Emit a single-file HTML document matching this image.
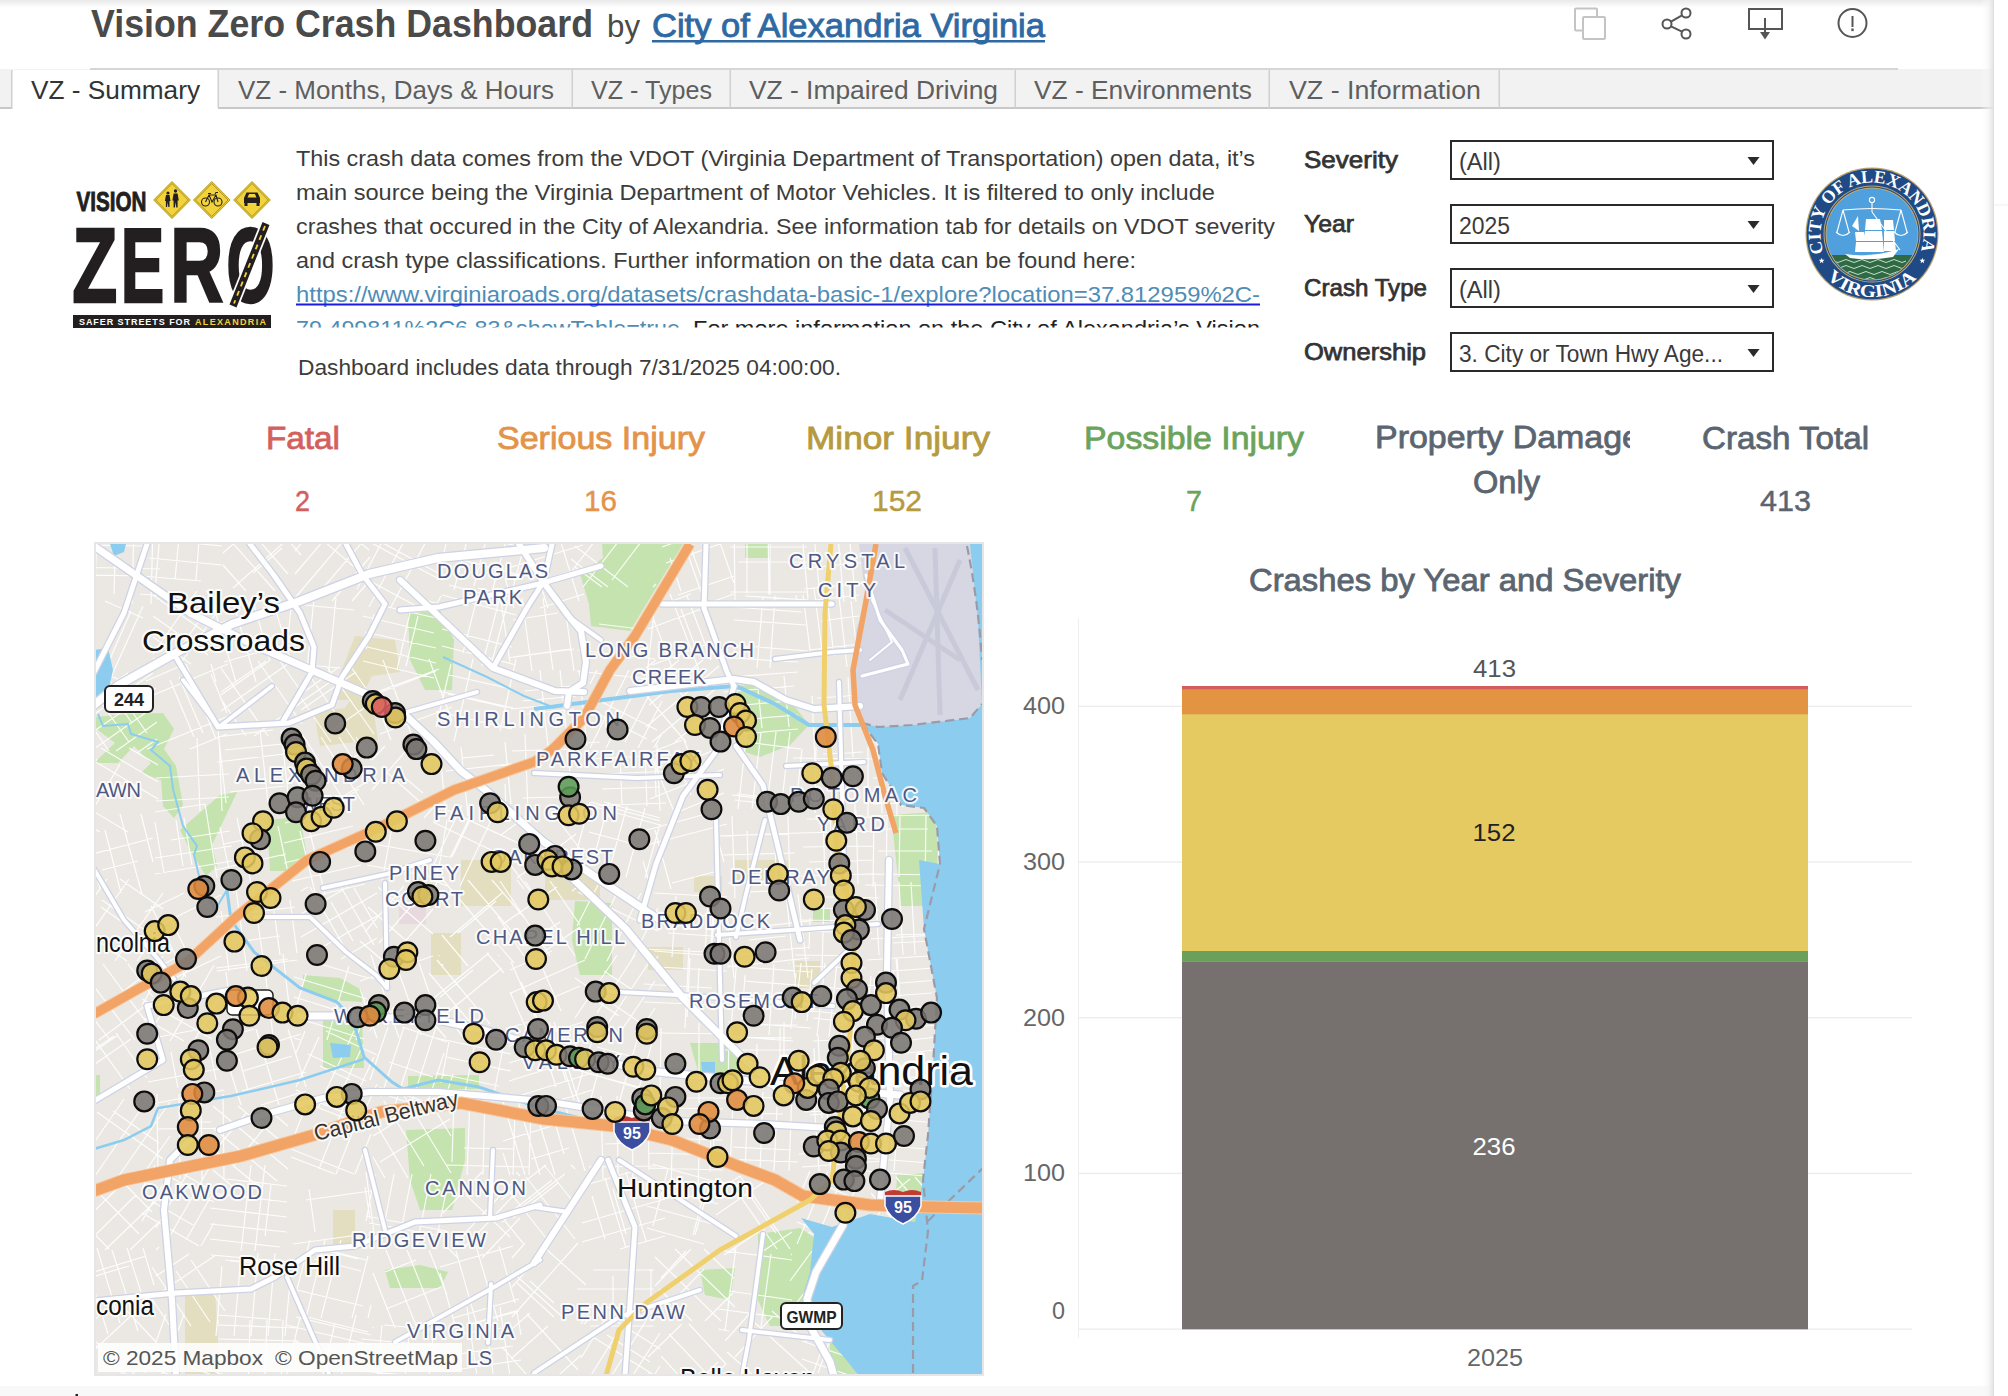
<!DOCTYPE html>
<html><head><meta charset="utf-8"><title>Vision Zero Crash Dashboard</title>
<style>html,body{margin:0;padding:0;background:#fff;width:2008px;height:1396px;overflow:hidden}
svg{display:block;font-family:"Liberation Sans", sans-serif}</style></head>
<body><svg width="2008" height="1396" viewBox="0 0 2008 1396">
<rect x="0" y="0" width="2008" height="1396" fill="#ffffff"/>
<defs><linearGradient id="tsh" x1="0" y1="0" x2="0" y2="1"><stop offset="0" stop-color="#e9e9e9"/><stop offset="1" stop-color="#ffffff"/></linearGradient><linearGradient id="rsh" x1="0" y1="0" x2="1" y2="0"><stop offset="0" stop-color="#ffffff" stop-opacity="0"/><stop offset="0.6" stop-color="#f2f2f2" stop-opacity="0.6"/><stop offset="1" stop-color="#dedede"/></linearGradient></defs>
<rect x="0" y="0" width="1994" height="8" fill="url(#tsh)"/>
<rect x="0" y="1386" width="1994" height="10" fill="#f8f8f8"/>
<rect x="75.5" y="1394" width="2.5" height="2" fill="#222"/>
<text x="91" y="37" font-size="38" fill="#4a4a4a" font-weight="bold" text-anchor="start" textLength="502" lengthAdjust="spacingAndGlyphs" >Vision Zero Crash Dashboard</text>
<text x="607" y="37" font-size="32" fill="#4a4a4a" font-weight="normal" text-anchor="start" textLength="33" lengthAdjust="spacingAndGlyphs" >by</text>
<text x="652" y="37" font-size="34" fill="#2f69a3" stroke="#2f69a3" stroke-width="0.9" textLength="393" lengthAdjust="spacingAndGlyphs">City of Alexandria Virginia</text>
<rect x="652" y="40" width="393" height="2.5" fill="#2f69a3"/>
<g fill="none" stroke="#c4c4c4" stroke-width="2"><rect x="1575" y="8.5" width="22" height="22" rx="1"/><rect x="1583" y="17" width="22" height="22" rx="1" fill="#fff"/></g>
<g fill="none" stroke="#555" stroke-width="2"><circle cx="1667" cy="24" r="4.5"/><circle cx="1686" cy="13" r="4.5"/><circle cx="1686" cy="34" r="4.5"/><line x1="1671" y1="21.7" x2="1682" y2="15.3"/><line x1="1671" y1="26.3" x2="1682" y2="31.7"/></g>
<g fill="none" stroke="#555" stroke-width="2"><rect x="1749" y="9" width="33" height="20"/><line x1="1765" y1="18" x2="1765" y2="34"/></g><line x1="1765" y1="18" x2="1765" y2="34" stroke="#555" stroke-width="2"/><path d="M1760 32 L1770 32 L1765 39.5 Z" fill="#555"/>
<g fill="none" stroke="#555" stroke-width="2"><circle cx="1852.5" cy="23" r="14"/><line x1="1852.5" y1="16" x2="1852.5" y2="27"/></g><rect x="1851.3" y="28.5" width="2.4" height="2.6" fill="#555"/>
<rect x="0" y="69" width="1994" height="40" fill="#f2f2f2"/>
<rect x="90" y="68" width="1808" height="2" fill="#d6d6d6"/>
<rect x="0" y="107" width="1994" height="2" fill="#c8c8c8"/>
<rect x="12" y="70" width="206" height="40" fill="#ffffff"/>
<rect x="11" y="70" width="1.5" height="39" fill="#cfcfcf"/>
<rect x="217.5" y="70" width="1.5" height="38" fill="#d0d0d0"/>
<rect x="571.5" y="70" width="1.5" height="38" fill="#d0d0d0"/>
<rect x="729.5" y="70" width="1.5" height="38" fill="#d0d0d0"/>
<rect x="1014.5" y="70" width="1.5" height="38" fill="#d0d0d0"/>
<rect x="1268.5" y="70" width="1.5" height="38" fill="#d0d0d0"/>
<rect x="1498.5" y="70" width="1.5" height="38" fill="#d0d0d0"/>
<text x="31" y="98.5" font-size="26" fill="#333333" textLength="169" lengthAdjust="spacingAndGlyphs">VZ - Summary</text>
<text x="238" y="98.5" font-size="26" fill="#5e5e5e" textLength="316" lengthAdjust="spacingAndGlyphs">VZ - Months, Days &amp; Hours</text>
<text x="591" y="98.5" font-size="26" fill="#5e5e5e" textLength="121" lengthAdjust="spacingAndGlyphs">VZ - Types</text>
<text x="749" y="98.5" font-size="26" fill="#5e5e5e" textLength="249" lengthAdjust="spacingAndGlyphs">VZ - Impaired Driving</text>
<text x="1034" y="98.5" font-size="26" fill="#5e5e5e" textLength="218" lengthAdjust="spacingAndGlyphs">VZ - Environments</text>
<text x="1289" y="98.5" font-size="26" fill="#5e5e5e" textLength="192" lengthAdjust="spacingAndGlyphs">VZ - Information</text>
<text x="296" y="166" font-size="22.5" fill="#3c3c3c" font-weight="normal" text-anchor="start" textLength="959" lengthAdjust="spacingAndGlyphs" >This crash data comes from the VDOT (Virginia Department of Transportation) open data, it’s</text>
<text x="296" y="200" font-size="22.5" fill="#3c3c3c" font-weight="normal" text-anchor="start" textLength="919" lengthAdjust="spacingAndGlyphs" >main source being the Virginia Department of Motor Vehicles. It is filtered to only include</text>
<text x="296" y="234" font-size="22.5" fill="#3c3c3c" font-weight="normal" text-anchor="start" textLength="979" lengthAdjust="spacingAndGlyphs" >crashes that occured in the City of Alexandria. See information tab for details on VDOT severity</text>
<text x="296" y="268" font-size="22.5" fill="#3c3c3c" font-weight="normal" text-anchor="start" textLength="840" lengthAdjust="spacingAndGlyphs" >and crash type classifications. Further information on the data can be found here:</text>
<text x="296" y="302" font-size="22.5" fill="#4e8db5" font-weight="normal" text-anchor="start" textLength="964" lengthAdjust="spacingAndGlyphs" >https://www.virginiaroads.org/datasets/crashdata-basic-1/explore?location=37.812959%2C-</text>
<rect x="296" y="303.5" width="964" height="2" fill="#1a1ae0"/>
<clipPath id="cl6"><rect x="280" y="310" width="1000" height="17.5"/></clipPath>
<g clip-path="url(#cl6)">
<text x="296" y="336" font-size="22.5" fill="#4e8db5" font-weight="normal" text-anchor="start" textLength="384" lengthAdjust="spacingAndGlyphs" >79.499811%2C6.83&amp;showTable=true</text>
<text x="693" y="336" font-size="22.5" fill="#222222" font-weight="normal" text-anchor="start" textLength="567" lengthAdjust="spacingAndGlyphs" >For more information on the City of Alexandria’s Vision</text>
</g>
<text x="298" y="375" font-size="21.5" fill="#3c3c3c" font-weight="normal" text-anchor="start" textLength="543" lengthAdjust="spacingAndGlyphs" >Dashboard includes data through 7/31/2025 04:00:00.</text>
<text x="1304" y="167.5" font-size="24" fill="#333333" font-weight="normal" text-anchor="start" textLength="94" lengthAdjust="spacingAndGlyphs" stroke="#333333" stroke-width="0.75">Severity</text>
<rect x="1451" y="141" width="322" height="38" fill="#fff" stroke="#2a2a2a" stroke-width="2"/>
<path d="M1747.5 157 L1759.5 157 L1753.5 165 Z" fill="#2a2a2a"/>
<text x="1304" y="231.5" font-size="24" fill="#333333" font-weight="normal" text-anchor="start" textLength="50" lengthAdjust="spacingAndGlyphs" stroke="#333333" stroke-width="0.75">Year</text>
<rect x="1451" y="205" width="322" height="38" fill="#fff" stroke="#2a2a2a" stroke-width="2"/>
<path d="M1747.5 221 L1759.5 221 L1753.5 229 Z" fill="#2a2a2a"/>
<text x="1304" y="295.5" font-size="24" fill="#333333" font-weight="normal" text-anchor="start" textLength="123" lengthAdjust="spacingAndGlyphs" stroke="#333333" stroke-width="0.75">Crash Type</text>
<rect x="1451" y="269" width="322" height="38" fill="#fff" stroke="#2a2a2a" stroke-width="2"/>
<path d="M1747.5 285 L1759.5 285 L1753.5 293 Z" fill="#2a2a2a"/>
<text x="1304" y="359.5" font-size="24" fill="#333333" font-weight="normal" text-anchor="start" textLength="122" lengthAdjust="spacingAndGlyphs" stroke="#333333" stroke-width="0.75">Ownership</text>
<rect x="1451" y="333" width="322" height="38" fill="#fff" stroke="#2a2a2a" stroke-width="2"/>
<path d="M1747.5 349 L1759.5 349 L1753.5 357 Z" fill="#2a2a2a"/>
<text x="1459" y="170" font-size="23" fill="#3a3a3a" font-weight="normal" text-anchor="start" textLength="42" lengthAdjust="spacingAndGlyphs" >(All)</text>
<text x="1459" y="234" font-size="23" fill="#3a3a3a" font-weight="normal" text-anchor="start" textLength="51" lengthAdjust="spacingAndGlyphs" >2025</text>
<text x="1459" y="298" font-size="23" fill="#3a3a3a" font-weight="normal" text-anchor="start" textLength="42" lengthAdjust="spacingAndGlyphs" >(All)</text>
<text x="1459" y="362" font-size="23" fill="#3a3a3a" font-weight="normal" text-anchor="start" textLength="264" lengthAdjust="spacingAndGlyphs" >3. City or Town Hwy Age...</text>
<text x="266" y="448.7" font-size="32" fill="#d4605e" stroke="#d4605e" stroke-width="0.8" textLength="74" lengthAdjust="spacingAndGlyphs">Fatal</text>
<text x="295" y="510.8" font-size="30" fill="#d4605e" stroke="#d4605e" stroke-width="0.45" textLength="15" lengthAdjust="spacingAndGlyphs">2</text>
<text x="497" y="448.7" font-size="32" fill="#e3934a" stroke="#e3934a" stroke-width="0.8" textLength="208" lengthAdjust="spacingAndGlyphs">Serious Injury</text>
<text x="584" y="510.8" font-size="30" fill="#e3934a" stroke="#e3934a" stroke-width="0.45" textLength="33" lengthAdjust="spacingAndGlyphs">16</text>
<text x="806" y="448.7" font-size="32" fill="#b59a3f" stroke="#b59a3f" stroke-width="0.8" textLength="184" lengthAdjust="spacingAndGlyphs">Minor Injury</text>
<text x="872" y="510.8" font-size="30" fill="#b59a3f" stroke="#b59a3f" stroke-width="0.45" textLength="50" lengthAdjust="spacingAndGlyphs">152</text>
<text x="1084" y="448.7" font-size="32" fill="#6ba35c" stroke="#6ba35c" stroke-width="0.8" textLength="220" lengthAdjust="spacingAndGlyphs">Possible Injury</text>
<text x="1186" y="510.8" font-size="30" fill="#6ba35c" stroke="#6ba35c" stroke-width="0.45" textLength="16" lengthAdjust="spacingAndGlyphs">7</text>
<clipPath id="clpd"><rect x="1360" y="410" width="270" height="60"/></clipPath>
<g clip-path="url(#clpd)"><text x="1375" y="448" font-size="32" fill="#5b6570" stroke="#5b6570" stroke-width="0.8" textLength="266" lengthAdjust="spacingAndGlyphs">Property Damage</text></g>
<text x="1473" y="493" font-size="32" fill="#5b6570" stroke="#5b6570" stroke-width="0.8" textLength="67" lengthAdjust="spacingAndGlyphs">Only</text>
<text x="1702" y="449" font-size="32" fill="#5b6570" stroke="#5b6570" stroke-width="0.8" textLength="167" lengthAdjust="spacingAndGlyphs">Crash Total</text>
<text x="1760" y="510.8" font-size="30" fill="#5b6570" stroke="#5b6570" stroke-width="0.45" textLength="51" lengthAdjust="spacingAndGlyphs">413</text>
<text x="1249" y="590.6" font-size="31" fill="#5b6570" stroke="#5b6570" stroke-width="0.8" textLength="432" lengthAdjust="spacingAndGlyphs">Crashes by Year and Severity</text>
<rect x="1078" y="618" width="1" height="720" fill="#efefef"/>
<rect x="1079" y="1328.5" width="833" height="1.3" fill="#ececec"/>
<text x="1052" y="1319.0" font-size="23" fill="#666" textLength="13" lengthAdjust="spacingAndGlyphs">0</text>
<rect x="1079" y="1172.8" width="833" height="1.3" fill="#ececec"/>
<text x="1023" y="1181.3" font-size="23" fill="#666" textLength="42" lengthAdjust="spacingAndGlyphs">100</text>
<rect x="1079" y="1017.1" width="833" height="1.3" fill="#ececec"/>
<text x="1023" y="1025.6" font-size="23" fill="#666" textLength="42" lengthAdjust="spacingAndGlyphs">200</text>
<rect x="1079" y="861.4" width="833" height="1.3" fill="#ececec"/>
<text x="1023" y="869.9" font-size="23" fill="#666" textLength="42" lengthAdjust="spacingAndGlyphs">300</text>
<rect x="1079" y="705.7" width="833" height="1.3" fill="#ececec"/>
<text x="1023" y="714.2" font-size="23" fill="#666" textLength="42" lengthAdjust="spacingAndGlyphs">400</text>
<rect x="1182" y="961.57" width="626" height="367.73" fill="#76716e"/>
<rect x="1182" y="950.67" width="626" height="11.20" fill="#6aa05a"/>
<rect x="1182" y="714.02" width="626" height="236.95" fill="#e5ca62"/>
<rect x="1182" y="689.11" width="626" height="25.21" fill="#e39443"/>
<rect x="1182" y="686.00" width="626" height="3.41" fill="#d65b5c"/>
<text x="1472.5" y="1155" font-size="23" fill="#ffffff" textLength="43" lengthAdjust="spacingAndGlyphs">236</text>
<text x="1472.5" y="841" font-size="23" fill="#222222" textLength="43" lengthAdjust="spacingAndGlyphs">152</text>
<text x="1473" y="677" font-size="23" fill="#555555" textLength="43" lengthAdjust="spacingAndGlyphs">413</text>
<text x="1467" y="1366" font-size="23" fill="#666666" textLength="56" lengthAdjust="spacingAndGlyphs">2025</text>
<rect x="1980" y="0" width="14" height="1396" fill="url(#rsh)"/>
<rect x="1994" y="204.5" width="14" height="1" fill="#efefef"/>
<g>
<text x="76.5" y="210.5" font-size="28" fill="#231f20" stroke="#231f20" stroke-width="0.9" font-weight="bold" textLength="70" lengthAdjust="spacingAndGlyphs">VISION</text>
<path d="M172 181.5 L190.3 200 L172 218.5 L153.7 200 Z" fill="#f2d33b" stroke="#b59a1a" stroke-width="1" stroke-linejoin="round"/>
<path d="M172 183.5 L188.3 200 L172 216.5 L155.7 200 Z" fill="none" stroke="#5a4a10" stroke-width="0.5"/>
<path d="M211.8 181.5 L230.10000000000002 200 L211.8 218.5 L193.5 200 Z" fill="#f2d33b" stroke="#b59a1a" stroke-width="1" stroke-linejoin="round"/>
<path d="M211.8 183.5 L228.10000000000002 200 L211.8 216.5 L195.5 200 Z" fill="none" stroke="#5a4a10" stroke-width="0.5"/>
<path d="M252 181.5 L270.3 200 L252 218.5 L233.7 200 Z" fill="#f2d33b" stroke="#b59a1a" stroke-width="1" stroke-linejoin="round"/>
<path d="M252 183.5 L268.3 200 L252 216.5 L235.7 200 Z" fill="none" stroke="#5a4a10" stroke-width="0.5"/>
<g fill="#231f20"><circle cx="168" cy="193" r="1.6"/><path d="M166 195 h3.5 l1 6 -1 0 0 6 -1.2 0 -0.6 -5 -0.6 5 -1.2 0 0 -6 -1 0 z"/><circle cx="175.5" cy="191" r="1.7"/><path d="M173.6 193.5 h4 l1.2 7 -1.2 0 0 7 -1.3 0 -0.7 -5.5 -0.7 5.5 -1.3 0 0 -7 -1.2 0 z"/></g>
<g fill="none" stroke="#231f20" stroke-width="1.1"><circle cx="205.5" cy="202" r="4"/><circle cx="218" cy="202" r="4"/><path d="M205.5 202 L209 195 L216 195 L218 202 M209 195 L212 202 L216 195 M208 193.5 h3 M215 194 l1 -1.5 h2"/></g>
<g fill="#231f20"><path d="M244 203 v-5 l2.5 -5.5 h11 l2.5 5.5 v5 z"/><rect x="244.5" y="203" width="3" height="3"/><rect x="256.5" y="203" width="3" height="3"/></g><path d="M247.5 197.5 l1.6 -3.5 h5.8 l1.6 3.5 z" fill="#f2d33b"/>
<text x="72.2" y="302" font-size="106" fill="#231f20" stroke="#231f20" stroke-width="2.6" stroke-linejoin="miter" font-weight="bold" textLength="45" lengthAdjust="spacingAndGlyphs">Z</text>
<text x="120.8" y="302" font-size="106" fill="#231f20" stroke="#231f20" stroke-width="2.6" stroke-linejoin="miter" font-weight="bold" textLength="43.5" lengthAdjust="spacingAndGlyphs">E</text>
<text x="170.2" y="302" font-size="106" fill="#231f20" stroke="#231f20" stroke-width="2.6" stroke-linejoin="miter" font-weight="bold" textLength="53" lengthAdjust="spacingAndGlyphs">R</text>
<text x="226.6" y="302" font-size="106" fill="#231f20" stroke="#231f20" stroke-width="2.6" stroke-linejoin="miter" font-weight="bold" textLength="48" lengthAdjust="spacingAndGlyphs">O</text>
<line x1="266" y1="223.5" x2="233" y2="306" stroke="#ffffff" stroke-width="11"/>
<line x1="266" y1="223.5" x2="233" y2="306" stroke="#231f20" stroke-width="7.5"/>
<line x1="265" y1="226" x2="234" y2="303.5" stroke="#f2d33b" stroke-width="1.8" stroke-dasharray="5 5"/>
<rect x="73" y="315" width="198" height="13" fill="#231f20"/>
<text x="79" y="325" font-size="9" fill="#ffffff" font-weight="bold" textLength="111" lengthAdjust="spacing">SAFER STREETS FOR</text>
<text x="195" y="325" font-size="9" fill="#f2d33b" font-weight="bold" textLength="71" lengthAdjust="spacing">ALEXANDRIA</text>
</g>
<defs><path id="sealtop" d="M1823.9 252.5 A51.5 51.5 0 1 1 1920.1 252.5"/><path id="sealbot" d="M1826.7 277.8 A63 63 0 0 0 1917.3 277.8"/></defs>
<circle cx="1872" cy="234" r="66.5" fill="#b9a16a"/>
<circle cx="1872" cy="234" r="65.3" fill="#1f4a86"/>
<circle cx="1872" cy="234" r="48.5" fill="#c2ab72"/>
<circle cx="1872" cy="234" r="47.5" fill="#1f4a86"/>
<circle cx="1872" cy="234" r="46.5" fill="#c2ab72"/>
<circle cx="1872" cy="234" r="45.5" fill="#4fa0dc"/>
<clipPath id="sealin"><circle cx="1872" cy="234" r="45.5"/></clipPath>
<g clip-path="url(#sealin)"><rect x="1820" y="255" width="110" height="30" fill="#2f6a45"/><path d="M1826 261 q4 -3 8 0 t8 0 t8 0 t8 0 t8 0 t8 0 t8 0 t8 0 t8 0 t8 0 M1826 267 q4 -3 8 0 t8 0 t8 0 t8 0 t8 0 t8 0 t8 0 t8 0 t8 0 t8 0 M1830 273 q4 -3 8 0 t8 0 t8 0 t8 0 t8 0 t8 0 t8 0 t8 0 t8 0 M1834 279 q4 -3 8 0 t8 0 t8 0 t8 0 t8 0 t8 0 t8 0 t8 0" fill="none" stroke="#d6ecd9" stroke-width="0.9"/></g>
<g fill="#ffffff"><path d="M1845 254 Q1872 258 1899 249 L1893 257 Q1870 261 1850 258 Z"/><path d="M1855 232 L1864 232 L1866 241 L1856 241 Z"/><path d="M1856 242 L1866 242 L1867 252 L1855 252 Z"/><path d="M1852 226 L1858 216 L1859 231 Z"/><path d="M1866 219 L1880 219 L1882 230 L1865 230 Z"/><path d="M1865 231 L1882 231 L1883 241 L1864 241 Z"/><path d="M1864 242 L1883 242 L1884 252 L1863 252 Z"/><path d="M1884 220 L1893 220 L1894 230 L1884 230 Z"/><path d="M1884 231 L1894 231 L1895 241 L1884 241 Z"/><path d="M1884 242 L1895 242 L1896 251 L1884 251 Z"/></g>
<g fill="none" stroke="#ffffff" stroke-width="1.1"><path d="M1843 210 Q1872 207 1901 210"/><line x1="1872" y1="203" x2="1872" y2="212"/><path d="M1843 210 L1837 232 M1843 210 L1849 232 M1836 232 q7 7 14 0 M1901 210 L1895 232 M1901 210 L1907 232 M1894 232 q7 7 14 0 M1872 212 L1900 250"/><circle cx="1872" cy="200" r="2.6"/></g>
<text font-size="18" fill="#ffffff" font-family="Liberation Serif" font-weight="bold"><textPath href="#sealtop" startOffset="0" textLength="197" lengthAdjust="spacingAndGlyphs">CITY OF ALEXANDRIA</textPath></text>
<text font-size="18" fill="#ffffff" font-family="Liberation Serif" font-weight="bold"><textPath href="#sealbot" startOffset="0" textLength="100" lengthAdjust="spacingAndGlyphs">VIRGINIA</textPath></text>
<polygon points="1821.7,257.8 1820.9,259.7 1818.8,259.8 1820.4,261.2 1819.9,263.2 1821.7,262.1 1823.4,263.2 1822.9,261.2 1824.5,259.8 1822.4,259.7" fill="#ffffff"/>
<polygon points="1922.3,257.8 1921.6,259.7 1919.5,259.8 1921.1,261.2 1920.6,263.2 1922.3,262.1 1924.1,263.2 1923.6,261.2 1925.2,259.8 1923.1,259.7" fill="#ffffff"/>
<rect x="94" y="542" width="890" height="834" fill="#e6e6e6"/>
<clipPath id="mapclip"><rect x="96" y="544" width="886" height="830"/></clipPath>
<g clip-path="url(#mapclip)">
<rect x="96" y="544" width="886" height="830" fill="#ebe8e3"/>
<polygon points="602,544 683,544 662,578 630,631 591,626 589,604 580,574 603,558" fill="#c4e3ae"/>
<polygon points="745,544 770,544 770,558 745,558" fill="#c4e3ae"/>
<polygon points="736,686 760,684 790,700 809,725 790,745 760,757 745,752 748,720" fill="#c4e3ae"/>
<polygon points="408,614 440,610 454,640 452,690 425,690 410,660" fill="#c4e3ae"/>
<polygon points="94,717 130,714 163,713 174,729 164,749 176,766 183,805 174,818 163,806 161,780 141,773 151,763 134,746 118,763 94,763 115,743 94,727" fill="#c4e3ae"/>
<polygon points="180,830 220,795 237,792 212,845 217,866 206,876 191,852" fill="#c4e3ae"/>
<polygon points="267,820 300,817 306,850 300,871 270,871" fill="#c4e3ae"/>
<polygon points="303,975 340,978 362,990 362,1002 330,1000 303,990" fill="#c4e3ae"/>
<polygon points="323,1020 362,1020 364,1068 323,1068" fill="#c4e3ae"/>
<polygon points="408,1076 479,1075 479,1089 408,1089" fill="#c4e3ae"/>
<polygon points="406,1130 465,1128 465,1160 452,1210 420,1210 410,1180" fill="#c4e3ae"/>
<polygon points="385,1270 420,1265 448,1272 440,1288 390,1288" fill="#c4e3ae"/>
<polygon points="575,901 612,903 612,975 580,975 572,940" fill="#c4e3ae"/>
<polygon points="690,1043 725,1043 740,1060 740,1078 700,1078" fill="#c4e3ae"/>
<polygon points="758,1234 800,1228 818,1240 818,1300 808,1326 770,1326 758,1300" fill="#c4e3ae"/>
<polygon points="830,1330 850,1330 860,1376 830,1376" fill="#c4e3ae"/>
<polygon points="897,1175 928,1173 928,1234 905,1234 895,1210" fill="#c4e3ae"/>
<polygon points="900,860 924,860 924,906 900,906" fill="#c4e3ae"/>
<polygon points="891,815 935,812 940,870 924,906 900,896" fill="#c4e3ae"/>
<polygon points="813,908 830,908 830,922 813,922" fill="#c4e3ae"/>
<polygon points="94,1075 100,1075 100,1098 94,1098" fill="#c4e3ae"/>
<polygon points="960,1300 982,1290 982,1376 960,1376" fill="#c4e3ae"/>
<polygon points="700,1270 735,1268 730,1300 705,1295" fill="#c4e3ae"/>
<polygon points="355,636 395,640 400,672 372,676 360,700 330,700" fill="#e4dec0"/>
<polygon points="314,712 345,708 350,700 372,700 378,740 320,746" fill="#e4dec0"/>
<polygon points="461,860 511,860 511,906 461,906" fill="#e4dec0"/>
<polygon points="431,933 461,933 461,975 431,975" fill="#e4dec0"/>
<polygon points="694,876 722,876 722,892 694,892" fill="#e4dec0"/>
<polygon points="648,947 683,947 683,970 648,970" fill="#e4dec0"/>
<polygon points="795,961 820,961 820,988 795,988" fill="#e4dec0"/>
<polygon points="185,1290 215,1290 220,1374 185,1374" fill="#e4dec0"/>
<polygon points="333,1210 355,1210 355,1244 333,1244" fill="#e4dec0"/>
<polygon points="735,860 790,860 790,880 735,880" fill="#e4dec0"/>
<polygon points="545,870 600,872 600,900 545,900" fill="#e4dec0"/>
<polygon points="399,906 426,906 426,924 399,924" fill="#e8d9de"/>
<path d="M153 525L151 604M134 525L132 604M116 525L114 594M97 525L95 589M78 530L77 587M143 546L93 545M136 529L100 528M146 576L88 575M160 569L75 567M140 520L208 526M140 538L222 546M149 558L222 565M142 576L201 581M140 594L185 598M161 522L155 591M179 537L175 580M199 541L196 580M296 516L301 522M267 516L301 555M238 516L288 574M223 532L275 591M223 565L246 591M282 548L253 573M299 529L233 588M265 516L223 553M370 580L352 601M370 557L332 601M370 533L312 601M361 520L295 598M341 520L295 574M321 520L295 551M369 550L337 523M365 576L312 531M441 596L435 607M436 523L391 607M411 528L369 607M393 521L357 589M438 573L370 536M418 607L357 574M439 579L364 539M524 546L509 603M510 526L489 603M490 525L474 586M471 525L454 590M451 525L443 556M503 599L449 585M524 548L455 530M523 576L443 555M559 536L579 601M529 549L548 608M505 578L514 608M578 569L516 588M583 545L505 569M584 594L540 608M656 584L653 587M644 538L612 580M639 515L583 587M615 515L571 572M592 515L571 541M652 538L621 515M628 587L575 546M608 587L571 559M602 587L575 567M734 594L700 606M734 576L678 595M734 539L666 563M715 528L662 547M663 528L659 529M734 583L715 528M706 606L679 529M703 582L692 551M681 591L670 558M730 532L807 532M730 547L807 547M738 562L807 562M730 592L807 592M770 524L770 594M747 525L747 593M768 523L769 595M734 517L735 600M871 522L879 602M849 534L856 602M837 527L844 602M814 535L819 586M801 522L808 599M796 595L797 602M872 524L798 531M877 582L804 589M880 561L796 569M869 530L944 526M872 544L944 540M880 558L944 554M869 572L935 568M869 586L930 582M906 598L944 596M940 518L944 582M926 525L930 589M869 519L874 598M912 518L917 598M958 525L1013 531M940 552L1013 561M943 567L1004 575M951 583L1013 591M984 534L979 577M986 529L979 582M998 533L992 582M105 601L143 618M68 657L133 686M68 676L92 686M131 611L99 684M143 606L107 686M87 601L68 642M206 591L230 608M153 595L230 650M153 616L208 655M153 637L191 664M153 658L162 664M212 603L175 655M197 591L153 654M225 601L180 664M273 601L291 661M253 601L270 661M233 601L256 682M212 601L236 682M211 664L216 682M272 607L214 625M284 645L224 662M336 598L328 679M314 598L306 681M292 598L287 648M340 668L307 665M354 610L305 605M416 598L436 603M379 605L436 618M363 616L434 633M365 632L436 648M363 646L436 663M363 661L434 678M374 614L366 649M411 608L397 670M418 616L406 666M478 588L516 598M442 595L516 615M442 629L512 647M442 646L516 665M500 597L482 666M510 594L490 669M477 598L463 653M565 608L574 671M543 598L553 670M522 598L532 671M501 602L510 662M558 613L513 620M574 649L508 658M570 649L513 657M655 605L646 684M658 680L577 671M640 629L599 624M655 659L578 650M716 641L652 665M712 605L648 629M691 594L648 610M699 670L670 594M698 654L681 609M673 670L648 605M711 660L687 596M745 596L808 600M733 607L802 612M734 620L806 625M733 645L808 651M733 658L798 662M763 596L757 668M775 596L770 668M873 588L882 664M851 601L857 651M838 588L847 667M826 588L834 656M814 588L824 667M803 595L811 658M800 667L800 667M877 642L809 650M859 595L816 600M859 616L821 621M943 616L939 668M932 606L927 672M922 591L916 672M910 591L904 672M888 592L881 672M876 591L870 672M938 630L869 625M932 613L879 609M923 619L886 616M926 649L878 645M941 595L1016 596M941 607L1016 608M952 619L1016 620M941 630L1016 632M945 642L1016 643M953 654L1016 655M941 666L1016 667M982 615L982 650M945 610L944 653M1014 592L1013 673M990 607L989 658M157 739L137 753M157 722L116 751M151 709L88 753M156 688L84 738M153 673L79 725M128 673L79 707M147 733L109 679M132 723L114 697M109 751L80 709M129 742L94 693M227 734L190 749M229 716L147 749M228 664L146 698M185 664L146 681M194 737L170 680M216 739L186 664M227 713L211 674M203 733L179 677M301 661L302 662M280 661L302 693M258 661L302 724M221 668L268 736M221 699L246 736M266 661L221 692M292 661L221 711M302 702L254 736M269 661L221 695M351 667L374 700M327 667L374 734M312 679L355 742M301 698L331 742M301 733L307 742M339 667L301 694M367 706L328 733M356 672L301 710M352 667L301 702M451 659L452 661M429 659L452 721M383 660L414 741M374 696L391 740M452 707L380 734M436 671L376 694M439 669L374 693M516 659L500 731M473 659L454 741M451 664L436 727M512 729L436 711M513 708L439 691M504 707L448 694M512 689L449 675M579 670L587 746M560 670L568 746M540 670L548 746M572 686L525 691M574 709L527 714M590 701L511 709M576 696L523 701M662 733L654 748M662 701L638 748M661 672L625 742M640 680L606 748M629 670L590 748M613 670L590 716M597 670L590 684M647 739L590 710M657 730L590 696M719 705L675 742M719 686L652 742M719 666L646 727M703 660L649 705M679 660L646 688M656 660L646 668M686 742L646 695M698 714L673 684M731 677L798 672M724 692L794 686M734 706L798 700M724 721L798 715M731 735L798 729M757 680L762 728M784 676L789 727M874 680L878 761M848 677L853 757M823 676L827 752M812 696L815 761M868 703L813 706M863 752L823 754M863 695L817 698M936 663L944 730M924 678L932 742M909 663L917 731M897 674L905 741M882 663L892 741M872 684L879 742M944 734L872 742M937 727L885 733M1028 679L1023 741M1018 668L1012 741M1007 668L1000 741M996 668L989 741M984 673L979 726M973 668L967 741M962 668L955 741M951 668L947 710M1017 685L962 680M1028 711L947 704M158 748L158 748M129 748L158 765M101 748L158 782M74 749L158 799M76 801L128 832M74 817L100 832M120 764L95 806M97 759L79 788M219 736L222 811M197 738L200 811M229 797L156 801M229 774L156 778M281 730L289 803M260 730L268 803M218 730L226 803M273 730L217 737M282 744L225 750M292 753L217 762M285 786L230 792M356 737L371 760M339 737L368 783M321 737L364 805M304 737L348 807M295 778L321 819M371 779L304 821M359 789L330 808M369 748L295 794M451 816L450 818M451 787L424 818M410 746L372 790M385 746L372 760M423 793L398 772M428 809L382 768M505 742L511 804M461 747L468 816M439 742L446 816M494 755L462 758M512 764L446 771M569 748L571 812M525 734L528 812M505 784L506 812M561 797L523 798M569 749L512 751M666 803L587 806M660 787L602 789M672 771L601 774M672 755L587 759M600 742L587 743M647 806L645 750M622 804L620 754M656 797L655 759M660 811L657 745M724 793L673 814M724 769L650 799M724 746L661 772M682 740L650 753M714 813L684 740M675 814L650 753M691 795L677 761M802 749L796 806M790 732L781 809M776 732L768 797M761 732L752 809M747 732L738 809M733 732L732 738M805 804L732 795M798 808L735 800M797 801L737 794M801 749L746 742M868 747L868 818M855 759L855 816M842 747L842 820M816 747L815 813M851 777L820 777M878 759L793 758M873 752L947 750M873 778L947 776M873 791L947 789M873 804L945 802M878 816L936 815M902 761L903 807M880 757L882 813M896 752L897 816M1012 757L1011 813M1001 745L1000 817M978 745L977 817M955 745L954 807M944 754L942 817M1008 791L940 789M1011 813L936 811M1013 748L935 746M141 814L153 862M120 814L142 894M105 830L121 893M86 837L100 888M153 838L81 857M138 861L102 870M232 877L224 878M232 861L155 874M232 846L155 858M230 831L171 840M205 804L155 812M164 873L155 822M183 866L176 820M217 878L205 804M192 865L184 818M278 826L289 877M237 818L255 901M220 827L234 893M267 835L224 844M286 854L215 870M365 884L310 897M361 865L292 881M350 847L284 863M353 826L284 843M308 817L285 823M325 895L309 828M316 896L300 831M367 843L449 857M367 865L433 877M447 820L434 896M392 827L382 882M445 809L518 843M433 822L518 863M433 880L447 886M462 805L433 866M470 817L450 858M470 820L452 857M498 806L460 886M584 882L572 891M576 834L517 878M533 811L501 835M534 876L516 852M584 854L551 811M530 891L501 852M564 868L532 825M660 824L645 878M645 808L626 877M627 806L607 878M609 802L592 865M590 802L577 850M660 821L591 802M648 848L589 832M660 818L604 802M660 825L588 805M708 803L724 862M655 830L671 889M643 861L649 882M727 824L643 846M717 811L643 831M714 872L672 883M788 816L790 891M774 816L777 898M747 831L749 898M732 816L735 898M795 853L723 855M791 881L728 883M801 833L717 836M776 891L744 892M807 819L874 817M801 833L874 831M803 847L874 846M809 862L874 860M801 876L874 874M856 810L858 884M823 813L825 882M830 810L832 884M939 815L938 877M926 815L925 887M900 815L899 877M887 817L886 887M874 816L873 887M932 851L878 851M928 829L883 829M946 875L865 874M946 886L865 885M944 830L1026 822M951 868L1021 862M952 881L1026 874M953 894L1026 887M1013 901L1026 900M992 827L998 891M974 833L979 888M949 842L952 883M163 956L159 961M163 924L137 961M163 893L115 961M129 879L87 939M107 879L82 914M163 909L120 879M142 936L101 907M127 961L82 930M149 933L102 900M221 956L177 977M221 936L145 973M221 895L145 932M184 893L145 912M190 959L169 915M186 977L151 906M290 900L297 953M271 889L280 955M253 889L265 971M236 889L247 971M221 911L229 971M280 936L236 942M295 907L216 917M297 960L217 971M377 938L341 959M377 916L317 950M377 893L301 937M348 887L301 914M308 887L301 891M377 928L354 888M374 945L341 887M351 959L310 887M353 941L331 902M433 966L433 966M433 909L384 966M426 889L379 943M404 886L365 932M433 934L378 887M419 952L368 907M389 966L360 941M517 880L524 889M492 880L524 917M468 880L524 946M443 880L514 963M442 935L468 966M442 964L443 966M496 901L458 933M502 893L450 937M576 881L580 887M550 881L580 925M525 881L575 956M500 881L550 956M498 917L524 956M498 955L499 956M560 922L534 939M580 927L538 956M557 887L503 924M658 956L655 961M658 908L631 961M641 893L607 961M616 895L585 959M598 885L577 926M645 905L616 890M658 931L578 892M654 893L727 897M657 912L727 917M668 933L727 937M654 951L716 956M714 899L710 960M708 905L705 952M715 902L711 957M676 896L672 957M798 894L808 978M786 894L795 978M726 906L734 978M809 921L726 930M786 936L749 940M809 958L727 967M809 947L728 956M805 896L879 898M812 908L879 910M795 920L879 921M795 931L872 933M795 955L861 956M795 966L865 968M810 918L809 949M851 894L850 974M824 894L822 974M849 906L848 963M946 882L950 954M934 882L938 955M923 884L926 945M911 882L915 955M899 882L903 955M887 888L890 942M875 882L879 955M952 934L871 939M929 934L896 935M933 941L893 943M996 875L1002 940M984 890L990 959M969 875L976 957M956 891L960 940M941 875L947 942M1006 917L933 923M996 888L939 893M999 929L943 934M128 964L153 997M103 964L150 1027M80 968L135 1040M80 1001L110 1040M131 991L102 1013M153 1000L99 1040M142 977L86 1020M220 1038L218 1041M220 996L194 1041M214 965L170 1041M190 965L147 1038M165 965L142 1005M212 1039L142 999M184 1041L142 1017M283 954L291 1022M263 954L273 1036M226 972L232 1021M288 959L216 968M273 991L236 996M317 963L368 978M294 977L367 999M294 997L365 1019M294 1017L364 1039M294 1038L300 1040M306 974L295 1011M349 966L327 1040M368 1001L356 1040M439 955L439 956M419 963L439 1022M397 967L421 1035M371 955L399 1038M360 989L377 1038M411 966L371 979M433 956L360 981M438 1001L372 1024M487 953L504 973M437 960L490 1024M429 973L483 1038M429 995L464 1038M429 1018L446 1038M489 953L429 1002M493 975L441 1018M473 970L440 997M502 968L432 1025M585 1031L581 1033M580 986L527 1009M585 960L511 993M552 951L510 970M542 1033L511 962M561 1011L543 969M528 1033L510 992M537 1018L521 982M655 1008L640 1031M655 981L621 1031M654 955L603 1031M635 955L597 1013M617 955L575 1018M619 1016L592 998M645 1026L575 978M640 995L604 971M644 949L727 953M659 967L727 971M644 984L712 988M644 1002L715 1005M699 968L697 1009M690 958L687 1017M689 948L685 1028M801 957L801 957M728 966L811 972M744 981L809 986M728 994L810 1000M728 1022L811 1028M728 1036L793 1041M745 975L742 1019M774 964L769 1035M737 957L730 1041M796 973L791 1029M871 976L865 1037M861 963L853 1037M849 963L841 1037M837 963L829 1037M825 963L817 1036M812 969L807 1021M801 963L795 1019M789 963L789 964M847 1022L813 1018M867 1017L794 1009M855 990L812 986M867 960L943 955M878 972L948 967M865 986L938 980M865 998L932 993M870 1010L933 1006M865 1023L931 1019M893 970L896 1016M874 978L876 1011M897 959L902 1027M896 958L902 1027M1017 946L1012 1017M1006 946L1000 1023M994 959L989 1023M983 946L978 1023M972 946L967 1013M960 946L955 1023M937 946L936 969M1017 995L936 989M1010 955L947 950M1017 979L936 973M1013 963L944 958M116 1033L147 1078M90 1033L130 1089M69 1076L96 1115M69 1113L71 1115M118 1035L69 1069M131 1039L69 1082M114 1036L70 1066M224 1090L147 1105M224 1068L148 1082M201 1029L153 1038M178 1088L171 1052M216 1080L209 1045M306 1091L261 1105M306 1072L242 1091M292 1056L243 1071M301 1034L227 1057M254 1029L227 1037M248 1090L239 1058M306 1087L288 1029M279 1105L256 1029M241 1105L227 1060M377 1084L366 1108M374 1057L353 1102M363 1045L335 1106M354 1031L318 1108M319 1037L296 1087M305 1031L296 1053M336 1108L296 1090M350 1080L320 1066M366 1081L308 1054M377 1055L326 1031M453 1074L442 1108M444 1053L426 1108M436 1027L410 1108M420 1027L394 1108M404 1027L381 1097M388 1027L370 1080M372 1027L370 1031M422 1107L380 1093M433 1077L389 1062M447 1042L402 1027M427 1102L379 1087M471 1028L509 1036M436 1038L511 1054M446 1057L511 1071M436 1073L499 1086M436 1107L441 1108M449 1042L441 1083M476 1038L464 1097M507 1028L491 1108M592 1090L548 1104M592 1073L509 1099M592 1055L509 1081M580 1041L509 1063M583 1022L509 1046M528 1022L509 1028M556 1087L541 1040M579 1103L554 1022M574 1100L549 1022M566 1081L553 1040M653 1092L645 1120M652 1043L629 1123M638 1037L614 1120M604 1050L591 1098M593 1037L576 1095M578 1037L570 1064M642 1067L593 1053M642 1089L580 1071M641 1059L597 1047M653 1091L570 1068M659 1033L730 1034M659 1076L733 1077M669 1098L733 1098M661 1028L660 1097M699 1023L699 1103M729 1024L728 1103M733 1025L797 1025M718 1037L792 1038M719 1050L797 1050M718 1074L780 1075M735 1087L792 1087M757 1044L757 1076M784 1022L784 1098M780 1028L780 1092M813 1041L888 1038M804 1065L888 1062M804 1089L888 1085M807 1101L888 1097M804 1112L880 1109M814 1059L815 1097M814 1048L817 1108M818 1035L822 1118M852 1035L856 1118M871 1032L945 1024M869 1045L945 1036M869 1057L945 1049M876 1069L945 1061M869 1082L945 1074M879 1094L945 1086M891 1046L896 1083M870 1031L878 1103M996 1020L1001 1094M984 1020L988 1094M972 1023L976 1094M947 1026L950 1081M935 1033L938 1094M1002 1063L951 1065M1002 1061L951 1064M1018 1026L935 1031M1003 1021L946 1024M170 1170L163 1180M170 1136L139 1180M170 1102L116 1180M148 1099L95 1176M124 1099L91 1147M159 1143L113 1111M163 1159L97 1112M223 1094L224 1179M201 1094L202 1179M179 1094L180 1179M157 1094L158 1179M232 1128L158 1129M211 1122L179 1122M264 1106L288 1126M238 1106L288 1147M213 1106L288 1169M213 1128L277 1181M213 1149L258 1186M213 1170L232 1186M266 1126L234 1165M246 1113L217 1148M371 1134L355 1174M364 1103L336 1174M347 1098L319 1169M309 1098L291 1144M365 1126L314 1106M371 1123L310 1099M354 1174L291 1149M335 1174L291 1157M447 1092L451 1098M428 1098L451 1136M403 1094L451 1173M384 1101L424 1166M373 1119L408 1178M373 1157L385 1178M435 1098L373 1136M450 1119L380 1162M531 1102L529 1175M515 1108L513 1175M485 1097L483 1175M470 1097L467 1175M454 1097L452 1162M529 1167L447 1165M513 1149L464 1148M532 1102L446 1099M578 1098L586 1125M563 1098L585 1171M548 1098L564 1154M532 1098L555 1175M517 1098L540 1175M503 1102L525 1175M503 1153L510 1175M585 1116L503 1141M569 1148L531 1159M663 1114L663 1124M648 1096L649 1170M632 1101L633 1179M617 1096L618 1179M601 1096L603 1179M656 1166L589 1167M640 1143L605 1144M659 1122L585 1123M652 1112L592 1113M662 1108L723 1109M649 1123L723 1124M654 1138L722 1140M649 1153L723 1155M649 1168L723 1170M649 1183L711 1185M714 1134L713 1168M673 1108L671 1193M700 1108L698 1193M711 1130L710 1172M792 1092L789 1171M777 1107L774 1171M763 1092L760 1171M748 1098L745 1171M733 1102L730 1171M783 1114L744 1113M797 1099L731 1096M791 1150L733 1147M798 1162L725 1159M803 1103L884 1097M810 1115L884 1110M814 1128L884 1123M801 1142L884 1135M799 1154L866 1150M802 1167L883 1161M826 1096L831 1173M814 1101L819 1171M857 1109L861 1156M841 1096L846 1173M865 1103L938 1109M865 1117L938 1123M865 1144L938 1150M865 1158L929 1163M865 1171L938 1177M899 1103L894 1171M878 1118L875 1153M936 1096L929 1179M938 1134L934 1174M1015 1117L1015 1163M1001 1102L1002 1176M987 1102L988 1176M973 1112L974 1176M959 1102L961 1176M946 1102L947 1172M1023 1173L945 1174M1011 1158L958 1159M159 1247L156 1250M159 1222L130 1250M159 1198L105 1250M136 1195L80 1250M134 1172L76 1229M109 1249L79 1218M139 1234L95 1189M152 1212L118 1177M214 1223L201 1246M214 1191L186 1240M211 1165L164 1246M192 1165L156 1228M174 1165L142 1221M155 1165L142 1189M193 1225L153 1202M214 1192L168 1165M199 1246L142 1213M214 1202L153 1167M226 1179L287 1186M210 1193L287 1202M210 1208L287 1217M210 1224L287 1232M210 1239L280 1247M271 1185L265 1236M251 1165L241 1251M265 1165L255 1251M365 1234L293 1244M378 1190L306 1200M315 1232L309 1189M374 1233L366 1172M370 1219L365 1187M446 1192L435 1247M431 1174L417 1245M412 1174L398 1247M394 1174L380 1247M375 1174L366 1221M446 1231L366 1216M435 1235L369 1223M516 1172L520 1176M466 1195L510 1237M443 1243L458 1258M520 1218L482 1258M482 1172L443 1213M511 1184L453 1246M513 1196L465 1247M571 1165L575 1169M544 1165L575 1204M526 1177L575 1239M501 1181L550 1243M501 1216L523 1243M558 1183L513 1218M546 1165L501 1200M552 1180L511 1212M565 1174L502 1222M665 1236L620 1249M665 1218L582 1242M665 1199L582 1223M631 1172L582 1186M605 1239L592 1196M646 1241L626 1172M626 1248L605 1178M626 1234L613 1189M652 1164L720 1183M661 1188L718 1204M647 1206L720 1226M647 1228L704 1244M710 1183L695 1235M707 1182L693 1235M668 1169L653 1226M792 1254L791 1255M792 1232L757 1255M792 1209L724 1255M767 1180L716 1215M740 1176L716 1192M777 1249L731 1183M790 1249L740 1176M776 1233L746 1190M880 1211L866 1245M862 1174L831 1245M845 1171L814 1245M828 1171L797 1244M810 1171L797 1202M868 1204L821 1184M851 1245L797 1222M838 1245L808 1232M953 1177L956 1180M934 1177L956 1203M915 1177L956 1226M896 1177L938 1227M871 1193L925 1259M871 1216L905 1257M871 1239L887 1259M946 1197L887 1246M910 1179L876 1207M978 1176L1015 1232M942 1184L985 1250M942 1247L944 1250M1009 1206L959 1238M997 1207L965 1228M994 1179L942 1214M143 1248L154 1285M127 1248L145 1305M112 1250L138 1331M97 1248L120 1323M81 1248L108 1334M72 1267L93 1334M68 1304L75 1326M129 1266L82 1280M146 1256L68 1280M191 1260L225 1311M176 1271L210 1322M152 1267L191 1326M152 1299L170 1326M189 1254L156 1276M216 1255L152 1298M291 1272L285 1336M275 1253L268 1336M258 1253L251 1336M241 1256L234 1336M222 1266L216 1336M283 1265L225 1260M291 1262L211 1255M281 1320L218 1315M278 1265L230 1261M371 1305L368 1318M368 1256L352 1318M341 1240L321 1318M325 1240L306 1318M310 1240L297 1289M366 1260L315 1247M358 1259L323 1250M361 1271L314 1259M363 1306L297 1290M429 1250L447 1295M407 1250L435 1320M386 1250L417 1328M373 1273L395 1328M373 1327L373 1328M441 1287L386 1309M416 1260L385 1272M499 1246L515 1303M476 1246L498 1321M456 1251L477 1325M440 1273L455 1325M519 1310L467 1325M519 1299L453 1318M519 1311L468 1325M513 1246L440 1267M588 1320L584 1324M578 1243L512 1317M551 1243L512 1287M525 1243L512 1258M586 1285L545 1248M554 1317L517 1283M566 1320L512 1272M554 1303L530 1281M654 1326L590 1326M654 1307L577 1308M654 1289L577 1289M654 1270L593 1270M613 1308L613 1276M651 1314L651 1269M732 1249L735 1251M704 1249L734 1278M675 1249L735 1307M655 1257L721 1321M659 1289L692 1321M655 1313L663 1321M735 1291L705 1321M704 1269L679 1295M686 1251L661 1278M691 1249L655 1286M718 1250L792 1260M729 1291L792 1300M718 1309L792 1319M718 1329L729 1331M734 1265L728 1306M771 1254L761 1327M736 1247L725 1331M876 1320L872 1324M876 1258L833 1316M835 1251L790 1312M812 1251L790 1281M869 1273L839 1251M876 1295L815 1251M866 1269L841 1251M939 1242L949 1252M910 1242L949 1279M881 1242L949 1306M879 1268L923 1309M866 1282L912 1326M942 1288L914 1318M930 1249L874 1308M943 1253L879 1321M949 1275L902 1326M1022 1266L1004 1331M1000 1264L983 1328M982 1251L961 1331M960 1251L947 1300M1013 1312L949 1295M1017 1293L955 1276M1022 1294L949 1275M999 1302L966 1293M156 1382L148 1389M156 1352L116 1389M136 1311L89 1355M104 1311L76 1338M156 1342L127 1311M135 1384L84 1329M137 1389L76 1324M227 1348L213 1387M184 1314L159 1383M166 1314L145 1373M212 1375L150 1352M227 1376L145 1346M203 1387L146 1366M283 1320L281 1394M267 1320L264 1394M250 1320L248 1394M218 1320L218 1324M299 1328L218 1325M299 1341L218 1339M356 1315L337 1393M335 1323L319 1392M300 1317L286 1377M363 1358L295 1342M371 1345L286 1325M371 1335L296 1317M368 1332L303 1316M384 1325L439 1330M361 1339L439 1346M361 1355L439 1362M361 1371L439 1378M361 1387L425 1393M361 1403L427 1409M382 1325L374 1409M409 1336L403 1399M434 1326L426 1409M517 1312L521 1335M500 1307L511 1383M486 1324L495 1387M467 1307L478 1383M513 1346L453 1355M521 1360L448 1371M502 1328L459 1334M581 1384L573 1392M581 1355L540 1392M548 1326L511 1359M530 1313L503 1337M542 1392L503 1348M578 1370L527 1314M660 1399L659 1401M660 1366L638 1401M660 1333L621 1394M647 1319L604 1388M626 1319L588 1380M605 1319L581 1358M584 1319L581 1324M650 1362L607 1335M621 1401L581 1376M660 1349L613 1319M654 1375L593 1337M689 1324L726 1364M669 1334L724 1392M661 1356L705 1404M648 1373L680 1408M726 1364L680 1408M718 1362L682 1397M682 1324L648 1357M802 1311L808 1316M772 1311L807 1342M755 1323L808 1371M727 1352L764 1385M725 1377L734 1385M773 1316L735 1357M752 1311L725 1341M845 1321L888 1336M831 1333L888 1353M802 1341L888 1371M802 1359L863 1380M831 1337L818 1373M832 1321L804 1399M873 1330L847 1403M950 1384L913 1399M947 1366L875 1393M947 1346L889 1368M957 1322L874 1353M904 1322L874 1333M912 1399L885 1328M935 1390L911 1326M943 1391L917 1322M944 1322L1015 1340M939 1335L1015 1355M950 1353L1015 1370M939 1365L1006 1383M939 1379L1013 1399M939 1394L957 1399M977 1337L965 1381M1003 1346L993 1386M986 1322L966 1399" fill="none" stroke="#ffffff" stroke-width="1.2" stroke-opacity="0.9"/>
<polygon points="859,544 982,544 982,704 970,718 912,725 878,727 862,723 853,694 856,630 866,601" fill="#d6d7e2"/>
<g stroke="#c9cad9" stroke-width="5" fill="none"><path d="M905 548 L978 690"/><path d="M935 548 L940 715"/><path d="M885 610 L960 660"/><path d="M960 560 L900 700"/></g>
<polygon points="970,544 982,544 982,1376 859,1376 848,1362 821,1330 803,1295 810,1272 814,1234 801,1218 832,1227 870,1214 915,1222 923,1180 928,1135 933,1066 937,998 924,929 919,860 940,864 937,826 924,808 901,805 894,792 882,773 878,744 862,723 878,727 912,725 970,718 982,704 978,620" fill="#8ccdef"/>
<path d="M967 546 Q978 600 982 660 M862 723 L878 727 L912 725 L970 718 L982 704 M862 723 L878 744 L882 773 L894 792 L901 805 L924 808 L937 826 L940 864 L924 929 L937 998 L933 1066 L928 1135 L923 1180 L928 1231 L922 1281 L913 1286 L913 1376 M928 1221 L984 1167" fill="none" stroke="#9b9ba8" stroke-width="2.2" stroke-dasharray="9 5"/>
<polygon points="94,650 108,648 113,670 108,693 94,700" fill="#8ccdef"/>
<polygon points="110,544 126,544 124,552 114,556" fill="#8ccdef"/>
<polygon points="701,1062 715,1062 715,1076 703,1076" fill="#8ccdef"/>
<polygon points="330,1043 351,1045 350,1057 333,1058" fill="#8ccdef"/>
<path d="M534 709 L603 700 L671 691 L736 686 L775 704 L809 725 L862 725" fill="none" stroke="#8ccdef" stroke-width="4"/>
<path d="M227 890 L231 920 L254 952 L300 988 L337 1002 L353 1020 L364 1057 L392 1082 L403 1089 L438 1080 L479 1087 L540 1108 L620 1128 L700 1150" fill="none" stroke="#8ccdef" stroke-width="3"/>
<path d="M364 1059 L300 1080 L231 1096 L158 1108 L151 1126 L124 1140 L94 1149" fill="none" stroke="#8ccdef" stroke-width="2.5"/>
<path d="M98 714 L103 726 L128 724 L131 734 L158 742 L151 750 L170 766 L173 789 L183 826 L197 846 L194 855 L200 880 L215 910 L227 890" fill="none" stroke="#8ccdef" stroke-width="2"/>
<path d="M443 657 L487 677 L524 696 L555 708" fill="none" stroke="#8ccdef" stroke-width="2"/>
<polyline points="94,546 140,578 190,613 254,645 323,675 369,695 404,714 433,741 461,771 488,792 518,819 544,842 600,880 660,920" fill="none" stroke="#cdd2e4" stroke-width="9.5" stroke-linejoin="round" stroke-linecap="round"/>
<polyline points="544,548 438,558 369,574 300,601 232,624 174,654 117,686 94,705" fill="none" stroke="#cdd2e4" stroke-width="10.5" stroke-linejoin="round" stroke-linecap="round"/>
<polyline points="147,544 124,613 94,672" fill="none" stroke="#cdd2e4" stroke-width="7.5" stroke-linejoin="round" stroke-linecap="round"/>
<polyline points="250,544 273,574 300,613 314,647 312,672 282,723" fill="none" stroke="#cdd2e4" stroke-width="7.5" stroke-linejoin="round" stroke-linecap="round"/>
<polyline points="183,680 219,727 272,686" fill="none" stroke="#cdd2e4" stroke-width="6.5" stroke-linejoin="round" stroke-linecap="round"/>
<polyline points="346,544 362,574 385,604 369,636 342,677 332,705 289,723 218,727 174,654" fill="none" stroke="#cdd2e4" stroke-width="7.5" stroke-linejoin="round" stroke-linecap="round"/>
<polyline points="706,544 704,608 727,672 734,686" fill="none" stroke="#cdd2e4" stroke-width="7.5" stroke-linejoin="round" stroke-linecap="round"/>
<polyline points="662,604 832,604" fill="none" stroke="#cdd2e4" stroke-width="7.5" stroke-linejoin="round" stroke-linecap="round"/>
<polyline points="400,580 431,609 493,668 555,691 584,692" fill="none" stroke="#cdd2e4" stroke-width="8.5" stroke-linejoin="round" stroke-linecap="round"/>
<polyline points="400,610 439,607 539,584 601,566" fill="none" stroke="#cdd2e4" stroke-width="7.5" stroke-linejoin="round" stroke-linecap="round"/>
<polyline points="493,668 528,606 544,581 552,544" fill="none" stroke="#cdd2e4" stroke-width="7.5" stroke-linejoin="round" stroke-linecap="round"/>
<polyline points="519,544 544,583 570,618 581,631 586,662 583,683 569,692 567,706" fill="none" stroke="#cdd2e4" stroke-width="8.5" stroke-linejoin="round" stroke-linecap="round"/>
<polyline points="570,618 601,640" fill="none" stroke="#cdd2e4" stroke-width="6.5" stroke-linejoin="round" stroke-linecap="round"/>
<polyline points="400,714 477,692" fill="none" stroke="#cdd2e4" stroke-width="6.5" stroke-linejoin="round" stroke-linecap="round"/>
<polyline points="775,659 832,652 860,650" fill="none" stroke="#cdd2e4" stroke-width="6.5" stroke-linejoin="round" stroke-linecap="round"/>
<polyline points="630,691 734,679 754,682 786,700 814,709 860,706" fill="none" stroke="#cdd2e4" stroke-width="8.5" stroke-linejoin="round" stroke-linecap="round"/>
<polyline points="866,575 880,620 902,650 908,664 862,676" fill="none" stroke="#cdd2e4" stroke-width="5.5" stroke-linejoin="round" stroke-linecap="round"/>
<polyline points="872,600 892,642 870,660" fill="none" stroke="#cdd2e4" stroke-width="4.5" stroke-linejoin="round" stroke-linecap="round"/>
<polyline points="734,686 717,750 683,796 656,864 640,920" fill="none" stroke="#cdd2e4" stroke-width="7.5" stroke-linejoin="round" stroke-linecap="round"/>
<polyline points="736,746 763,785 782,864 800,940" fill="none" stroke="#cdd2e4" stroke-width="7.5" stroke-linejoin="round" stroke-linecap="round"/>
<polyline points="534,773 637,778 720,775" fill="none" stroke="#cdd2e4" stroke-width="6.5" stroke-linejoin="round" stroke-linecap="round"/>
<polyline points="786,766 864,762" fill="none" stroke="#cdd2e4" stroke-width="6.5" stroke-linejoin="round" stroke-linecap="round"/>
<polyline points="839,682 844,864 850,960" fill="none" stroke="#cdd2e4" stroke-width="6.5" stroke-linejoin="round" stroke-linecap="round"/>
<polyline points="889,860 887,970 890,1100 880,1200" fill="none" stroke="#cdd2e4" stroke-width="8.5" stroke-linejoin="round" stroke-linecap="round"/>
<polyline points="568,874 626,929 683,998 740,1055 790,1100" fill="none" stroke="#cdd2e4" stroke-width="9.5" stroke-linejoin="round" stroke-linecap="round"/>
<polyline points="300,1016 346,1016 438,1020 484,1030 544,1048 648,1071 740,1080 827,1089 900,1095" fill="none" stroke="#cdd2e4" stroke-width="9.5" stroke-linejoin="round" stroke-linecap="round"/>
<polyline points="94,1101 163,1060 147,1006 230,990" fill="none" stroke="#cdd2e4" stroke-width="7.5" stroke-linejoin="round" stroke-linecap="round"/>
<polyline points="220,1130 266,1114 323,1098 369,1092 438,1092 544,1101 600,1110 671,1121 763,1124 830,1128" fill="none" stroke="#cdd2e4" stroke-width="8.5" stroke-linejoin="round" stroke-linecap="round"/>
<polyline points="94,869 124,920 158,959 174,979" fill="none" stroke="#cdd2e4" stroke-width="6.5" stroke-linejoin="round" stroke-linecap="round"/>
<polyline points="323,888 387,874 430,860" fill="none" stroke="#cdd2e4" stroke-width="6.5" stroke-linejoin="round" stroke-linecap="round"/>
<polyline points="254,917 310,917 346,952 376,975 387,988" fill="none" stroke="#cdd2e4" stroke-width="6.5" stroke-linejoin="round" stroke-linecap="round"/>
<polyline points="385,883 387,988" fill="none" stroke="#cdd2e4" stroke-width="6.5" stroke-linejoin="round" stroke-linecap="round"/>
<polyline points="717,935 878,924" fill="none" stroke="#cdd2e4" stroke-width="6.5" stroke-linejoin="round" stroke-linecap="round"/>
<polyline points="716,820 722,1060" fill="none" stroke="#cdd2e4" stroke-width="6.5" stroke-linejoin="round" stroke-linecap="round"/>
<polyline points="814,983 862,937" fill="none" stroke="#cdd2e4" stroke-width="6.5" stroke-linejoin="round" stroke-linecap="round"/>
<polyline points="600,991 678,995 833,1006" fill="none" stroke="#cdd2e4" stroke-width="6.5" stroke-linejoin="round" stroke-linecap="round"/>
<polyline points="765,820 746,894 736,937" fill="none" stroke="#cdd2e4" stroke-width="6.5" stroke-linejoin="round" stroke-linecap="round"/>
<polyline points="601,1160 534,1263" fill="none" stroke="#cdd2e4" stroke-width="8.5" stroke-linejoin="round" stroke-linecap="round"/>
<polyline points="608,1160 635,1227 630,1303 625,1376" fill="none" stroke="#cdd2e4" stroke-width="7.5" stroke-linejoin="round" stroke-linecap="round"/>
<polyline points="534,1207 568,1212" fill="none" stroke="#cdd2e4" stroke-width="6.5" stroke-linejoin="round" stroke-linecap="round"/>
<polyline points="763,1234 749,1339 742,1376" fill="none" stroke="#cdd2e4" stroke-width="6.5" stroke-linejoin="round" stroke-linecap="round"/>
<polyline points="619,1160 736,1236" fill="none" stroke="#cdd2e4" stroke-width="6.5" stroke-linejoin="round" stroke-linecap="round"/>
<polyline points="534,1373 619,1317 700,1290" fill="none" stroke="#cdd2e4" stroke-width="6.5" stroke-linejoin="round" stroke-linecap="round"/>
<polyline points="843,1225 816,1272 807,1299 810,1326 830,1362 834,1376" fill="none" stroke="#cdd2e4" stroke-width="9.5" stroke-linejoin="round" stroke-linecap="round"/>
<polyline points="742,1330 830,1340" fill="none" stroke="#cdd2e4" stroke-width="6.5" stroke-linejoin="round" stroke-linecap="round"/>
<polyline points="94,1301 176,1293 251,1289 275,1277 315,1250 355,1246 415,1222 496,1218 540,1205" fill="none" stroke="#cdd2e4" stroke-width="7.5" stroke-linejoin="round" stroke-linecap="round"/>
<polyline points="176,1376 172,1300 164,1210 170,1160 190,1140" fill="none" stroke="#cdd2e4" stroke-width="8.5" stroke-linejoin="round" stroke-linecap="round"/>
<polyline points="287,1277 315,1341 330,1376" fill="none" stroke="#cdd2e4" stroke-width="6.5" stroke-linejoin="round" stroke-linecap="round"/>
<polyline points="365,1150 385,1230" fill="none" stroke="#cdd2e4" stroke-width="6.5" stroke-linejoin="round" stroke-linecap="round"/>
<polyline points="493,1150 490,1217" fill="none" stroke="#cdd2e4" stroke-width="6.5" stroke-linejoin="round" stroke-linecap="round"/>
<polyline points="491,1284 488,1343" fill="none" stroke="#cdd2e4" stroke-width="6.5" stroke-linejoin="round" stroke-linecap="round"/>
<polyline points="395,1342 496,1286 540,1260" fill="none" stroke="#cdd2e4" stroke-width="6.5" stroke-linejoin="round" stroke-linecap="round"/>
<polyline points="94,546 140,578 190,613 254,645 323,675 369,695 404,714 433,741 461,771 488,792 518,819 544,842 600,880 660,920" fill="none" stroke="#ffffff" stroke-width="7" stroke-linejoin="round" stroke-linecap="round"/>
<polyline points="544,548 438,558 369,574 300,601 232,624 174,654 117,686 94,705" fill="none" stroke="#ffffff" stroke-width="8" stroke-linejoin="round" stroke-linecap="round"/>
<polyline points="147,544 124,613 94,672" fill="none" stroke="#ffffff" stroke-width="5" stroke-linejoin="round" stroke-linecap="round"/>
<polyline points="250,544 273,574 300,613 314,647 312,672 282,723" fill="none" stroke="#ffffff" stroke-width="5" stroke-linejoin="round" stroke-linecap="round"/>
<polyline points="183,680 219,727 272,686" fill="none" stroke="#ffffff" stroke-width="4" stroke-linejoin="round" stroke-linecap="round"/>
<polyline points="346,544 362,574 385,604 369,636 342,677 332,705 289,723 218,727 174,654" fill="none" stroke="#ffffff" stroke-width="5" stroke-linejoin="round" stroke-linecap="round"/>
<polyline points="706,544 704,608 727,672 734,686" fill="none" stroke="#ffffff" stroke-width="5" stroke-linejoin="round" stroke-linecap="round"/>
<polyline points="662,604 832,604" fill="none" stroke="#ffffff" stroke-width="5" stroke-linejoin="round" stroke-linecap="round"/>
<polyline points="400,580 431,609 493,668 555,691 584,692" fill="none" stroke="#ffffff" stroke-width="6" stroke-linejoin="round" stroke-linecap="round"/>
<polyline points="400,610 439,607 539,584 601,566" fill="none" stroke="#ffffff" stroke-width="5" stroke-linejoin="round" stroke-linecap="round"/>
<polyline points="493,668 528,606 544,581 552,544" fill="none" stroke="#ffffff" stroke-width="5" stroke-linejoin="round" stroke-linecap="round"/>
<polyline points="519,544 544,583 570,618 581,631 586,662 583,683 569,692 567,706" fill="none" stroke="#ffffff" stroke-width="6" stroke-linejoin="round" stroke-linecap="round"/>
<polyline points="570,618 601,640" fill="none" stroke="#ffffff" stroke-width="4" stroke-linejoin="round" stroke-linecap="round"/>
<polyline points="400,714 477,692" fill="none" stroke="#ffffff" stroke-width="4" stroke-linejoin="round" stroke-linecap="round"/>
<polyline points="775,659 832,652 860,650" fill="none" stroke="#ffffff" stroke-width="4" stroke-linejoin="round" stroke-linecap="round"/>
<polyline points="630,691 734,679 754,682 786,700 814,709 860,706" fill="none" stroke="#ffffff" stroke-width="6" stroke-linejoin="round" stroke-linecap="round"/>
<polyline points="866,575 880,620 902,650 908,664 862,676" fill="none" stroke="#ffffff" stroke-width="3" stroke-linejoin="round" stroke-linecap="round"/>
<polyline points="872,600 892,642 870,660" fill="none" stroke="#ffffff" stroke-width="2" stroke-linejoin="round" stroke-linecap="round"/>
<polyline points="734,686 717,750 683,796 656,864 640,920" fill="none" stroke="#ffffff" stroke-width="5" stroke-linejoin="round" stroke-linecap="round"/>
<polyline points="736,746 763,785 782,864 800,940" fill="none" stroke="#ffffff" stroke-width="5" stroke-linejoin="round" stroke-linecap="round"/>
<polyline points="534,773 637,778 720,775" fill="none" stroke="#ffffff" stroke-width="4" stroke-linejoin="round" stroke-linecap="round"/>
<polyline points="786,766 864,762" fill="none" stroke="#ffffff" stroke-width="4" stroke-linejoin="round" stroke-linecap="round"/>
<polyline points="839,682 844,864 850,960" fill="none" stroke="#ffffff" stroke-width="4" stroke-linejoin="round" stroke-linecap="round"/>
<polyline points="889,860 887,970 890,1100 880,1200" fill="none" stroke="#ffffff" stroke-width="6" stroke-linejoin="round" stroke-linecap="round"/>
<polyline points="568,874 626,929 683,998 740,1055 790,1100" fill="none" stroke="#ffffff" stroke-width="7" stroke-linejoin="round" stroke-linecap="round"/>
<polyline points="300,1016 346,1016 438,1020 484,1030 544,1048 648,1071 740,1080 827,1089 900,1095" fill="none" stroke="#ffffff" stroke-width="7" stroke-linejoin="round" stroke-linecap="round"/>
<polyline points="94,1101 163,1060 147,1006 230,990" fill="none" stroke="#ffffff" stroke-width="5" stroke-linejoin="round" stroke-linecap="round"/>
<polyline points="220,1130 266,1114 323,1098 369,1092 438,1092 544,1101 600,1110 671,1121 763,1124 830,1128" fill="none" stroke="#ffffff" stroke-width="6" stroke-linejoin="round" stroke-linecap="round"/>
<polyline points="94,869 124,920 158,959 174,979" fill="none" stroke="#ffffff" stroke-width="4" stroke-linejoin="round" stroke-linecap="round"/>
<polyline points="323,888 387,874 430,860" fill="none" stroke="#ffffff" stroke-width="4" stroke-linejoin="round" stroke-linecap="round"/>
<polyline points="254,917 310,917 346,952 376,975 387,988" fill="none" stroke="#ffffff" stroke-width="4" stroke-linejoin="round" stroke-linecap="round"/>
<polyline points="385,883 387,988" fill="none" stroke="#ffffff" stroke-width="4" stroke-linejoin="round" stroke-linecap="round"/>
<polyline points="717,935 878,924" fill="none" stroke="#ffffff" stroke-width="4" stroke-linejoin="round" stroke-linecap="round"/>
<polyline points="716,820 722,1060" fill="none" stroke="#ffffff" stroke-width="4" stroke-linejoin="round" stroke-linecap="round"/>
<polyline points="814,983 862,937" fill="none" stroke="#ffffff" stroke-width="4" stroke-linejoin="round" stroke-linecap="round"/>
<polyline points="600,991 678,995 833,1006" fill="none" stroke="#ffffff" stroke-width="4" stroke-linejoin="round" stroke-linecap="round"/>
<polyline points="765,820 746,894 736,937" fill="none" stroke="#ffffff" stroke-width="4" stroke-linejoin="round" stroke-linecap="round"/>
<polyline points="601,1160 534,1263" fill="none" stroke="#ffffff" stroke-width="6" stroke-linejoin="round" stroke-linecap="round"/>
<polyline points="608,1160 635,1227 630,1303 625,1376" fill="none" stroke="#ffffff" stroke-width="5" stroke-linejoin="round" stroke-linecap="round"/>
<polyline points="534,1207 568,1212" fill="none" stroke="#ffffff" stroke-width="4" stroke-linejoin="round" stroke-linecap="round"/>
<polyline points="763,1234 749,1339 742,1376" fill="none" stroke="#ffffff" stroke-width="4" stroke-linejoin="round" stroke-linecap="round"/>
<polyline points="619,1160 736,1236" fill="none" stroke="#ffffff" stroke-width="4" stroke-linejoin="round" stroke-linecap="round"/>
<polyline points="534,1373 619,1317 700,1290" fill="none" stroke="#ffffff" stroke-width="4" stroke-linejoin="round" stroke-linecap="round"/>
<polyline points="843,1225 816,1272 807,1299 810,1326 830,1362 834,1376" fill="none" stroke="#ffffff" stroke-width="7" stroke-linejoin="round" stroke-linecap="round"/>
<polyline points="742,1330 830,1340" fill="none" stroke="#ffffff" stroke-width="4" stroke-linejoin="round" stroke-linecap="round"/>
<polyline points="94,1301 176,1293 251,1289 275,1277 315,1250 355,1246 415,1222 496,1218 540,1205" fill="none" stroke="#ffffff" stroke-width="5" stroke-linejoin="round" stroke-linecap="round"/>
<polyline points="176,1376 172,1300 164,1210 170,1160 190,1140" fill="none" stroke="#ffffff" stroke-width="6" stroke-linejoin="round" stroke-linecap="round"/>
<polyline points="287,1277 315,1341 330,1376" fill="none" stroke="#ffffff" stroke-width="4" stroke-linejoin="round" stroke-linecap="round"/>
<polyline points="365,1150 385,1230" fill="none" stroke="#ffffff" stroke-width="4" stroke-linejoin="round" stroke-linecap="round"/>
<polyline points="493,1150 490,1217" fill="none" stroke="#ffffff" stroke-width="4" stroke-linejoin="round" stroke-linecap="round"/>
<polyline points="491,1284 488,1343" fill="none" stroke="#ffffff" stroke-width="4" stroke-linejoin="round" stroke-linecap="round"/>
<polyline points="395,1342 496,1286 540,1260" fill="none" stroke="#ffffff" stroke-width="4" stroke-linejoin="round" stroke-linecap="round"/>
<polyline points="690,544 635,636 610,670 584,718 552,750 534,762 454,790 376,829 307,860 236,917 186,963 140,988 94,1014" fill="none" stroke="#f7c8a0" stroke-width="11" stroke-linejoin="round"/>
<polyline points="690,544 635,636 610,670 584,718 552,750 534,762 454,790 376,829 307,860 236,917 186,963 140,988 94,1014" fill="none" stroke="#f2a466" stroke-width="9" stroke-linejoin="round"/>
<polyline points="94,1191 124,1180 241,1156 314,1135 381,1112 461,1103 544,1119 614,1126 672,1140 740,1167 775,1180 803,1196 870,1205 930,1207 984,1208" fill="none" stroke="#f7c8a0" stroke-width="13" stroke-linejoin="round"/>
<polyline points="94,1191 124,1180 241,1156 314,1135 381,1112 461,1103 544,1119 614,1126 672,1140 740,1167 775,1180 803,1196 870,1205 930,1207 984,1208" fill="none" stroke="#f2a466" stroke-width="11" stroke-linejoin="round"/>
<polyline points="876,544 866,601 853,670 855,705 873,750 885,796 896,833" fill="none" stroke="#f2a466" stroke-width="5.5" stroke-linejoin="round"/>
<polyline points="831,544 825,613 824,705 832,773 837,851 855,929 850,1034 832,1180 810,1200 720,1250 646,1303 619,1330 606,1376" fill="none" stroke="#f0d06c" stroke-width="5" stroke-linejoin="round"/>
<text x="437" y="578" font-size="20" fill="#4e5884" stroke="#ffffff" stroke-opacity="0.85" stroke-width="4" stroke-linejoin="round" paint-order="stroke" textLength="111" lengthAdjust="spacing">DOUGLAS</text>
<text x="463" y="604" font-size="20" fill="#4e5884" stroke="#ffffff" stroke-opacity="0.85" stroke-width="4" stroke-linejoin="round" paint-order="stroke" textLength="59" lengthAdjust="spacing">PARK</text>
<text x="789" y="568" font-size="20" fill="#4e5884" stroke="#ffffff" stroke-opacity="0.85" stroke-width="4" stroke-linejoin="round" paint-order="stroke" textLength="116" lengthAdjust="spacing">CRYSTAL</text>
<text x="818" y="597" font-size="20" fill="#4e5884" stroke="#ffffff" stroke-opacity="0.85" stroke-width="4" stroke-linejoin="round" paint-order="stroke" textLength="58" lengthAdjust="spacing">CITY</text>
<text x="585" y="657" font-size="20" fill="#4e5884" stroke="#ffffff" stroke-opacity="0.85" stroke-width="4" stroke-linejoin="round" paint-order="stroke" textLength="169" lengthAdjust="spacing">LONG BRANCH</text>
<text x="632" y="684" font-size="20" fill="#4e5884" stroke="#ffffff" stroke-opacity="0.85" stroke-width="4" stroke-linejoin="round" paint-order="stroke" textLength="74" lengthAdjust="spacing">CREEK</text>
<text x="437" y="726" font-size="20" fill="#4e5884" stroke="#ffffff" stroke-opacity="0.85" stroke-width="4" stroke-linejoin="round" paint-order="stroke" textLength="183" lengthAdjust="spacing">SHIRLINGTON</text>
<text x="536" y="766" font-size="20" fill="#4e5884" stroke="#ffffff" stroke-opacity="0.85" stroke-width="4" stroke-linejoin="round" paint-order="stroke" textLength="164" lengthAdjust="spacing">PARKFAIRFAX</text>
<text x="236" y="782" font-size="20" fill="#4e5884" stroke="#ffffff" stroke-opacity="0.85" stroke-width="4" stroke-linejoin="round" paint-order="stroke" textLength="169" lengthAdjust="spacing">ALEXANDRIA</text>
<text x="300" y="811" font-size="20" fill="#4e5884" stroke="#ffffff" stroke-opacity="0.85" stroke-width="4" stroke-linejoin="round" paint-order="stroke" textLength="55" lengthAdjust="spacing">WEST</text>
<text x="96" y="797" font-size="20" fill="#4e5884" stroke="#ffffff" stroke-opacity="0.85" stroke-width="4" stroke-linejoin="round" paint-order="stroke" textLength="45" lengthAdjust="spacing">AWN</text>
<text x="434" y="820" font-size="20" fill="#4e5884" stroke="#ffffff" stroke-opacity="0.85" stroke-width="4" stroke-linejoin="round" paint-order="stroke" textLength="183" lengthAdjust="spacing">FAIRLINGTON</text>
<text x="790" y="802" font-size="20" fill="#4e5884" stroke="#ffffff" stroke-opacity="0.85" stroke-width="4" stroke-linejoin="round" paint-order="stroke" textLength="127" lengthAdjust="spacing">POTOMAC</text>
<text x="817" y="831" font-size="20" fill="#4e5884" stroke="#ffffff" stroke-opacity="0.85" stroke-width="4" stroke-linejoin="round" paint-order="stroke" textLength="68" lengthAdjust="spacing">YARD</text>
<text x="389" y="880" font-size="20" fill="#4e5884" stroke="#ffffff" stroke-opacity="0.85" stroke-width="4" stroke-linejoin="round" paint-order="stroke" textLength="70" lengthAdjust="spacing">PINEY</text>
<text x="385" y="906" font-size="20" fill="#4e5884" stroke="#ffffff" stroke-opacity="0.85" stroke-width="4" stroke-linejoin="round" paint-order="stroke" textLength="78" lengthAdjust="spacing">COURT</text>
<text x="491" y="864" font-size="20" fill="#4e5884" stroke="#ffffff" stroke-opacity="0.85" stroke-width="4" stroke-linejoin="round" paint-order="stroke" textLength="122" lengthAdjust="spacing">OAKCREST</text>
<text x="731" y="884" font-size="20" fill="#4e5884" stroke="#ffffff" stroke-opacity="0.85" stroke-width="4" stroke-linejoin="round" paint-order="stroke" textLength="99" lengthAdjust="spacing">DEL RAY</text>
<text x="641" y="928" font-size="20" fill="#4e5884" stroke="#ffffff" stroke-opacity="0.85" stroke-width="4" stroke-linejoin="round" paint-order="stroke" textLength="129" lengthAdjust="spacing">BRADDOCK</text>
<text x="476" y="944" font-size="20" fill="#4e5884" stroke="#ffffff" stroke-opacity="0.85" stroke-width="4" stroke-linejoin="round" paint-order="stroke" textLength="149" lengthAdjust="spacing">CHAPEL HILL</text>
<text x="689" y="1008" font-size="20" fill="#4e5884" stroke="#ffffff" stroke-opacity="0.85" stroke-width="4" stroke-linejoin="round" paint-order="stroke" textLength="129" lengthAdjust="spacing">ROSEMONT</text>
<text x="334" y="1023" font-size="20" fill="#4e5884" stroke="#ffffff" stroke-opacity="0.85" stroke-width="4" stroke-linejoin="round" paint-order="stroke" textLength="150" lengthAdjust="spacing">WAKEFIELD</text>
<text x="505" y="1042" font-size="20" fill="#4e5884" stroke="#ffffff" stroke-opacity="0.85" stroke-width="4" stroke-linejoin="round" paint-order="stroke" textLength="118" lengthAdjust="spacing">CAMERON</text>
<text x="522" y="1069" font-size="20" fill="#4e5884" stroke="#ffffff" stroke-opacity="0.85" stroke-width="4" stroke-linejoin="round" paint-order="stroke" textLength="98" lengthAdjust="spacing">VALLEY</text>
<text x="142" y="1199" font-size="20" fill="#4e5884" stroke="#ffffff" stroke-opacity="0.85" stroke-width="4" stroke-linejoin="round" paint-order="stroke" textLength="120" lengthAdjust="spacing">OAKWOOD</text>
<text x="425" y="1195" font-size="20" fill="#4e5884" stroke="#ffffff" stroke-opacity="0.85" stroke-width="4" stroke-linejoin="round" paint-order="stroke" textLength="101" lengthAdjust="spacing">CANNON</text>
<text x="352" y="1247" font-size="20" fill="#4e5884" stroke="#ffffff" stroke-opacity="0.85" stroke-width="4" stroke-linejoin="round" paint-order="stroke" textLength="134" lengthAdjust="spacing">RIDGEVIEW</text>
<text x="561" y="1319" font-size="20" fill="#4e5884" stroke="#ffffff" stroke-opacity="0.85" stroke-width="4" stroke-linejoin="round" paint-order="stroke" textLength="124" lengthAdjust="spacing">PENN DAW</text>
<text x="407" y="1338" font-size="20" fill="#4e5884" stroke="#ffffff" stroke-opacity="0.85" stroke-width="4" stroke-linejoin="round" paint-order="stroke" textLength="107" lengthAdjust="spacing">VIRGINIA</text>
<text x="467" y="1365" font-size="20" fill="#4e5884" stroke="#ffffff" stroke-opacity="0.85" stroke-width="4" stroke-linejoin="round" paint-order="stroke" textLength="25" lengthAdjust="spacing">LS</text>
<text x="167" y="613" font-size="30" fill="#111111" stroke="#ffffff" stroke-opacity="0.85" stroke-width="4" stroke-linejoin="round" paint-order="stroke" textLength="113" lengthAdjust="spacingAndGlyphs">Bailey’s</text>
<text x="142" y="651" font-size="30" fill="#111111" stroke="#ffffff" stroke-opacity="0.85" stroke-width="4" stroke-linejoin="round" paint-order="stroke" textLength="163" lengthAdjust="spacingAndGlyphs">Crossroads</text>
<text x="96" y="952" font-size="27" fill="#111111" stroke="#ffffff" stroke-opacity="0.85" stroke-width="4" stroke-linejoin="round" paint-order="stroke" textLength="74" lengthAdjust="spacingAndGlyphs">ncolnia</text>
<text x="617" y="1197" font-size="26" fill="#111111" stroke="#ffffff" stroke-opacity="0.85" stroke-width="4" stroke-linejoin="round" paint-order="stroke" textLength="136" lengthAdjust="spacingAndGlyphs">Huntington</text>
<text x="239" y="1275" font-size="26" fill="#111111" stroke="#ffffff" stroke-opacity="0.85" stroke-width="4" stroke-linejoin="round" paint-order="stroke" textLength="101" lengthAdjust="spacingAndGlyphs">Rose Hill</text>
<text x="96" y="1315" font-size="27" fill="#111111" stroke="#ffffff" stroke-opacity="0.85" stroke-width="4" stroke-linejoin="round" paint-order="stroke" textLength="58" lengthAdjust="spacingAndGlyphs">conia</text>
<text x="680" y="1388" font-size="27" fill="#111111" stroke="#ffffff" stroke-opacity="0.85" stroke-width="4" stroke-linejoin="round" paint-order="stroke" textLength="135" lengthAdjust="spacingAndGlyphs">Belle Haven</text>
<text x="0" y="0" font-size="22" fill="#333333" stroke="#ffffff" stroke-opacity="0.85" stroke-width="4" stroke-linejoin="round" paint-order="stroke" transform="translate(316,1141) rotate(-14)" textLength="148" lengthAdjust="spacingAndGlyphs">Capital Beltway</text>
<rect x="105" y="686" width="48" height="26" rx="5" fill="#fff" stroke="#222" stroke-width="2"/>
<text x="129" y="706" font-size="18" font-weight="bold" fill="#222" text-anchor="middle">244</text>
<rect x="227" y="990" width="46" height="25" rx="5" fill="#fff" stroke="#222" stroke-width="1.5"/>
<rect x="781" y="1303" width="61" height="26" rx="5" fill="#fff" stroke="#222" stroke-width="2"/>
<text x="811.5" y="1323" font-size="17" font-weight="bold" fill="#222" text-anchor="middle" textLength="50" lengthAdjust="spacingAndGlyphs">GWMP</text>
<path d="M614 1118 q9 -4 18 0 q9 -4 18 0 v4 h-36 z" fill="#c23b33"/>
<path d="M614 1122 h36 v10 q-4 12 -18 18 q-14 -6 -18 -18 z" fill="#3b4ea0" stroke="#fff" stroke-width="1.5"/>
<text x="632" y="1139" font-size="16" font-weight="bold" fill="#fff" text-anchor="middle">95</text>
<path d="M885 1192 q9 -4 18 0 q9 -4 18 0 v4 h-36 z" fill="#c23b33"/>
<path d="M885 1196 h36 v10 q-4 12 -18 18 q-14 -6 -18 -18 z" fill="#3b4ea0" stroke="#fff" stroke-width="1.5"/>
<text x="903" y="1213" font-size="16" font-weight="bold" fill="#fff" text-anchor="middle">95</text>
<text x="770" y="1085" font-size="41" fill="#111111" stroke="#ffffff" stroke-width="5" stroke-linejoin="round" paint-order="stroke" textLength="203" lengthAdjust="spacingAndGlyphs">Alexandria</text>
<circle cx="372.8" cy="701.0" r="9.9" fill="#7a7572" fill-opacity="0.88" stroke="#0d0d0d" stroke-width="2.2"/>
<circle cx="375.8" cy="704.0" r="9.9" fill="#e3c75d" fill-opacity="0.88" stroke="#0d0d0d" stroke-width="2.2"/>
<circle cx="395.0" cy="713.0" r="9.9" fill="#7a7572" fill-opacity="0.88" stroke="#0d0d0d" stroke-width="2.2"/>
<circle cx="395.4" cy="717.5" r="9.9" fill="#e3c75d" fill-opacity="0.88" stroke="#0d0d0d" stroke-width="2.2"/>
<circle cx="381.8" cy="707.0" r="9.9" fill="#da5f5d" fill-opacity="0.88" stroke="#0d0d0d" stroke-width="2.2"/>
<circle cx="335.2" cy="723.5" r="9.9" fill="#7a7572" fill-opacity="0.88" stroke="#0d0d0d" stroke-width="2.2"/>
<circle cx="291.6" cy="738.6" r="9.9" fill="#7a7572" fill-opacity="0.88" stroke="#0d0d0d" stroke-width="2.2"/>
<circle cx="294.6" cy="744.6" r="9.9" fill="#7a7572" fill-opacity="0.88" stroke="#0d0d0d" stroke-width="2.2"/>
<circle cx="296.0" cy="752.0" r="9.9" fill="#e3c75d" fill-opacity="0.88" stroke="#0d0d0d" stroke-width="2.2"/>
<circle cx="305.0" cy="762.6" r="9.9" fill="#7a7572" fill-opacity="0.88" stroke="#0d0d0d" stroke-width="2.2"/>
<circle cx="306.6" cy="768.6" r="9.9" fill="#e3c75d" fill-opacity="0.88" stroke="#0d0d0d" stroke-width="2.2"/>
<circle cx="311.1" cy="774.7" r="9.9" fill="#7a7572" fill-opacity="0.88" stroke="#0d0d0d" stroke-width="2.2"/>
<circle cx="315.6" cy="780.7" r="9.9" fill="#7a7572" fill-opacity="0.88" stroke="#0d0d0d" stroke-width="2.2"/>
<circle cx="366.8" cy="747.6" r="9.9" fill="#7a7572" fill-opacity="0.88" stroke="#0d0d0d" stroke-width="2.2"/>
<circle cx="351.7" cy="768.6" r="9.9" fill="#7a7572" fill-opacity="0.88" stroke="#0d0d0d" stroke-width="2.2"/>
<circle cx="342.7" cy="764.1" r="9.9" fill="#df8a3c" fill-opacity="0.88" stroke="#0d0d0d" stroke-width="2.2"/>
<circle cx="413.4" cy="744.6" r="9.9" fill="#7a7572" fill-opacity="0.88" stroke="#0d0d0d" stroke-width="2.2"/>
<circle cx="416.4" cy="749.1" r="9.9" fill="#7a7572" fill-opacity="0.88" stroke="#0d0d0d" stroke-width="2.2"/>
<circle cx="431.5" cy="764.1" r="9.9" fill="#e3c75d" fill-opacity="0.88" stroke="#0d0d0d" stroke-width="2.2"/>
<circle cx="279.5" cy="803.2" r="9.9" fill="#7a7572" fill-opacity="0.88" stroke="#0d0d0d" stroke-width="2.2"/>
<circle cx="297.6" cy="797.2" r="9.9" fill="#7a7572" fill-opacity="0.88" stroke="#0d0d0d" stroke-width="2.2"/>
<circle cx="312.6" cy="795.7" r="9.9" fill="#7a7572" fill-opacity="0.88" stroke="#0d0d0d" stroke-width="2.2"/>
<circle cx="296.0" cy="812.3" r="9.9" fill="#7a7572" fill-opacity="0.88" stroke="#0d0d0d" stroke-width="2.2"/>
<circle cx="311.1" cy="821.3" r="9.9" fill="#e3c75d" fill-opacity="0.88" stroke="#0d0d0d" stroke-width="2.2"/>
<circle cx="321.6" cy="816.8" r="9.9" fill="#e3c75d" fill-opacity="0.88" stroke="#0d0d0d" stroke-width="2.2"/>
<circle cx="333.7" cy="807.8" r="9.9" fill="#e3c75d" fill-opacity="0.88" stroke="#0d0d0d" stroke-width="2.2"/>
<circle cx="263.0" cy="821.3" r="9.9" fill="#e3c75d" fill-opacity="0.88" stroke="#0d0d0d" stroke-width="2.2"/>
<circle cx="260.0" cy="839.3" r="9.9" fill="#7a7572" fill-opacity="0.88" stroke="#0d0d0d" stroke-width="2.2"/>
<circle cx="252.5" cy="833.3" r="9.9" fill="#e3c75d" fill-opacity="0.88" stroke="#0d0d0d" stroke-width="2.2"/>
<circle cx="244.9" cy="857.4" r="9.9" fill="#e3c75d" fill-opacity="0.88" stroke="#0d0d0d" stroke-width="2.2"/>
<circle cx="252.5" cy="863.4" r="9.9" fill="#e3c75d" fill-opacity="0.88" stroke="#0d0d0d" stroke-width="2.2"/>
<circle cx="231.4" cy="880.0" r="9.9" fill="#7a7572" fill-opacity="0.88" stroke="#0d0d0d" stroke-width="2.2"/>
<circle cx="204.3" cy="886.0" r="9.9" fill="#7a7572" fill-opacity="0.88" stroke="#0d0d0d" stroke-width="2.2"/>
<circle cx="198.3" cy="889.0" r="9.9" fill="#df8a3c" fill-opacity="0.88" stroke="#0d0d0d" stroke-width="2.2"/>
<circle cx="207.3" cy="907.0" r="9.9" fill="#7a7572" fill-opacity="0.88" stroke="#0d0d0d" stroke-width="2.2"/>
<circle cx="257.0" cy="892.0" r="9.9" fill="#e3c75d" fill-opacity="0.88" stroke="#0d0d0d" stroke-width="2.2"/>
<circle cx="270.5" cy="898.0" r="9.9" fill="#e3c75d" fill-opacity="0.88" stroke="#0d0d0d" stroke-width="2.2"/>
<circle cx="254.0" cy="913.0" r="9.9" fill="#e3c75d" fill-opacity="0.88" stroke="#0d0d0d" stroke-width="2.2"/>
<circle cx="320.1" cy="861.9" r="9.9" fill="#7a7572" fill-opacity="0.88" stroke="#0d0d0d" stroke-width="2.2"/>
<circle cx="365.3" cy="851.4" r="9.9" fill="#7a7572" fill-opacity="0.88" stroke="#0d0d0d" stroke-width="2.2"/>
<circle cx="375.8" cy="831.8" r="9.9" fill="#e3c75d" fill-opacity="0.88" stroke="#0d0d0d" stroke-width="2.2"/>
<circle cx="396.9" cy="821.3" r="9.9" fill="#e3c75d" fill-opacity="0.88" stroke="#0d0d0d" stroke-width="2.2"/>
<circle cx="425.4" cy="840.8" r="9.9" fill="#7a7572" fill-opacity="0.88" stroke="#0d0d0d" stroke-width="2.2"/>
<circle cx="490.1" cy="803.2" r="9.9" fill="#7a7572" fill-opacity="0.88" stroke="#0d0d0d" stroke-width="2.2"/>
<circle cx="497.6" cy="812.3" r="9.9" fill="#e3c75d" fill-opacity="0.88" stroke="#0d0d0d" stroke-width="2.2"/>
<circle cx="315.6" cy="904.0" r="9.9" fill="#7a7572" fill-opacity="0.88" stroke="#0d0d0d" stroke-width="2.2"/>
<circle cx="418.0" cy="892.0" r="9.9" fill="#7a7572" fill-opacity="0.88" stroke="#0d0d0d" stroke-width="2.2"/>
<circle cx="428.4" cy="895.0" r="9.9" fill="#7a7572" fill-opacity="0.88" stroke="#0d0d0d" stroke-width="2.2"/>
<circle cx="422.4" cy="896.5" r="9.9" fill="#e3c75d" fill-opacity="0.88" stroke="#0d0d0d" stroke-width="2.2"/>
<circle cx="529.2" cy="843.9" r="9.9" fill="#7a7572" fill-opacity="0.88" stroke="#0d0d0d" stroke-width="2.2"/>
<circle cx="491.6" cy="861.9" r="9.9" fill="#e3c75d" fill-opacity="0.88" stroke="#0d0d0d" stroke-width="2.2"/>
<circle cx="500.7" cy="861.9" r="9.9" fill="#e3c75d" fill-opacity="0.88" stroke="#0d0d0d" stroke-width="2.2"/>
<circle cx="535.2" cy="864.9" r="9.9" fill="#7a7572" fill-opacity="0.88" stroke="#0d0d0d" stroke-width="2.2"/>
<circle cx="154.7" cy="931.1" r="9.9" fill="#e3c75d" fill-opacity="0.88" stroke="#0d0d0d" stroke-width="2.2"/>
<circle cx="168.2" cy="925.1" r="9.9" fill="#e3c75d" fill-opacity="0.88" stroke="#0d0d0d" stroke-width="2.2"/>
<circle cx="234.4" cy="941.6" r="9.9" fill="#e3c75d" fill-opacity="0.88" stroke="#0d0d0d" stroke-width="2.2"/>
<circle cx="186.0" cy="959.0" r="9.9" fill="#7a7572" fill-opacity="0.88" stroke="#0d0d0d" stroke-width="2.2"/>
<circle cx="393.9" cy="956.7" r="9.9" fill="#7a7572" fill-opacity="0.88" stroke="#0d0d0d" stroke-width="2.2"/>
<circle cx="407.4" cy="952.2" r="9.9" fill="#e3c75d" fill-opacity="0.88" stroke="#0d0d0d" stroke-width="2.2"/>
<circle cx="538.3" cy="899.5" r="9.9" fill="#e3c75d" fill-opacity="0.88" stroke="#0d0d0d" stroke-width="2.2"/>
<circle cx="535.2" cy="935.6" r="9.9" fill="#7a7572" fill-opacity="0.88" stroke="#0d0d0d" stroke-width="2.2"/>
<circle cx="687.4" cy="707.0" r="9.9" fill="#e3c75d" fill-opacity="0.88" stroke="#0d0d0d" stroke-width="2.2"/>
<circle cx="701.0" cy="707.0" r="9.9" fill="#7a7572" fill-opacity="0.88" stroke="#0d0d0d" stroke-width="2.2"/>
<circle cx="719.0" cy="707.0" r="9.9" fill="#7a7572" fill-opacity="0.88" stroke="#0d0d0d" stroke-width="2.2"/>
<circle cx="735.5" cy="704.0" r="9.9" fill="#e3c75d" fill-opacity="0.88" stroke="#0d0d0d" stroke-width="2.2"/>
<circle cx="740.0" cy="713.0" r="9.9" fill="#e3c75d" fill-opacity="0.88" stroke="#0d0d0d" stroke-width="2.2"/>
<circle cx="746.0" cy="720.5" r="9.9" fill="#e3c75d" fill-opacity="0.88" stroke="#0d0d0d" stroke-width="2.2"/>
<circle cx="695.0" cy="725.0" r="9.9" fill="#e3c75d" fill-opacity="0.88" stroke="#0d0d0d" stroke-width="2.2"/>
<circle cx="710.0" cy="728.0" r="9.9" fill="#7a7572" fill-opacity="0.88" stroke="#0d0d0d" stroke-width="2.2"/>
<circle cx="734.0" cy="726.5" r="9.9" fill="#df8a3c" fill-opacity="0.88" stroke="#0d0d0d" stroke-width="2.2"/>
<circle cx="720.5" cy="741.6" r="9.9" fill="#7a7572" fill-opacity="0.88" stroke="#0d0d0d" stroke-width="2.2"/>
<circle cx="746.0" cy="737.0" r="9.9" fill="#e3c75d" fill-opacity="0.88" stroke="#0d0d0d" stroke-width="2.2"/>
<circle cx="617.6" cy="729.5" r="9.9" fill="#7a7572" fill-opacity="0.88" stroke="#0d0d0d" stroke-width="2.2"/>
<circle cx="575.5" cy="739.2" r="9.9" fill="#7a7572" fill-opacity="0.88" stroke="#0d0d0d" stroke-width="2.2"/>
<circle cx="673.9" cy="773.2" r="9.9" fill="#7a7572" fill-opacity="0.88" stroke="#0d0d0d" stroke-width="2.2"/>
<circle cx="681.4" cy="764.1" r="9.9" fill="#e3c75d" fill-opacity="0.88" stroke="#0d0d0d" stroke-width="2.2"/>
<circle cx="690.4" cy="761.1" r="9.9" fill="#e3c75d" fill-opacity="0.88" stroke="#0d0d0d" stroke-width="2.2"/>
<circle cx="707.6" cy="789.7" r="9.9" fill="#e3c75d" fill-opacity="0.88" stroke="#0d0d0d" stroke-width="2.2"/>
<circle cx="711.5" cy="809.3" r="9.9" fill="#7a7572" fill-opacity="0.88" stroke="#0d0d0d" stroke-width="2.2"/>
<circle cx="570.1" cy="797.2" r="9.9" fill="#7a7572" fill-opacity="0.88" stroke="#0d0d0d" stroke-width="2.2"/>
<circle cx="568.6" cy="786.7" r="9.9" fill="#5b9a55" fill-opacity="0.88" stroke="#0d0d0d" stroke-width="2.2"/>
<circle cx="568.6" cy="815.3" r="9.9" fill="#e3c75d" fill-opacity="0.88" stroke="#0d0d0d" stroke-width="2.2"/>
<circle cx="579.1" cy="813.8" r="9.9" fill="#e3c75d" fill-opacity="0.88" stroke="#0d0d0d" stroke-width="2.2"/>
<circle cx="639.3" cy="839.3" r="9.9" fill="#7a7572" fill-opacity="0.88" stroke="#0d0d0d" stroke-width="2.2"/>
<circle cx="609.2" cy="873.9" r="9.9" fill="#7a7572" fill-opacity="0.88" stroke="#0d0d0d" stroke-width="2.2"/>
<circle cx="555.0" cy="855.9" r="9.9" fill="#7a7572" fill-opacity="0.88" stroke="#0d0d0d" stroke-width="2.2"/>
<circle cx="547.5" cy="860.0" r="9.9" fill="#e3c75d" fill-opacity="0.88" stroke="#0d0d0d" stroke-width="2.2"/>
<circle cx="552.0" cy="866.4" r="9.9" fill="#e3c75d" fill-opacity="0.88" stroke="#0d0d0d" stroke-width="2.2"/>
<circle cx="571.6" cy="869.4" r="9.9" fill="#7a7572" fill-opacity="0.88" stroke="#0d0d0d" stroke-width="2.2"/>
<circle cx="562.6" cy="866.4" r="9.9" fill="#e3c75d" fill-opacity="0.88" stroke="#0d0d0d" stroke-width="2.2"/>
<circle cx="825.8" cy="737.0" r="9.9" fill="#df8a3c" fill-opacity="0.88" stroke="#0d0d0d" stroke-width="2.2"/>
<circle cx="812.3" cy="773.2" r="9.9" fill="#e3c75d" fill-opacity="0.88" stroke="#0d0d0d" stroke-width="2.2"/>
<circle cx="831.8" cy="777.7" r="9.9" fill="#7a7572" fill-opacity="0.88" stroke="#0d0d0d" stroke-width="2.2"/>
<circle cx="852.9" cy="776.2" r="9.9" fill="#7a7572" fill-opacity="0.88" stroke="#0d0d0d" stroke-width="2.2"/>
<circle cx="767.1" cy="801.7" r="9.9" fill="#7a7572" fill-opacity="0.88" stroke="#0d0d0d" stroke-width="2.2"/>
<circle cx="780.7" cy="804.1" r="9.9" fill="#7a7572" fill-opacity="0.88" stroke="#0d0d0d" stroke-width="2.2"/>
<circle cx="798.7" cy="801.7" r="9.9" fill="#7a7572" fill-opacity="0.88" stroke="#0d0d0d" stroke-width="2.2"/>
<circle cx="813.8" cy="798.7" r="9.9" fill="#7a7572" fill-opacity="0.88" stroke="#0d0d0d" stroke-width="2.2"/>
<circle cx="833.3" cy="809.3" r="9.9" fill="#e3c75d" fill-opacity="0.88" stroke="#0d0d0d" stroke-width="2.2"/>
<circle cx="846.9" cy="822.8" r="9.9" fill="#7a7572" fill-opacity="0.88" stroke="#0d0d0d" stroke-width="2.2"/>
<circle cx="836.3" cy="840.8" r="9.9" fill="#e3c75d" fill-opacity="0.88" stroke="#0d0d0d" stroke-width="2.2"/>
<circle cx="839.3" cy="863.4" r="9.9" fill="#7a7572" fill-opacity="0.88" stroke="#0d0d0d" stroke-width="2.2"/>
<circle cx="840.8" cy="875.4" r="9.9" fill="#e3c75d" fill-opacity="0.88" stroke="#0d0d0d" stroke-width="2.2"/>
<circle cx="843.9" cy="890.5" r="9.9" fill="#e3c75d" fill-opacity="0.88" stroke="#0d0d0d" stroke-width="2.2"/>
<circle cx="777.7" cy="873.9" r="9.9" fill="#e3c75d" fill-opacity="0.88" stroke="#0d0d0d" stroke-width="2.2"/>
<circle cx="779.2" cy="890.5" r="9.9" fill="#7a7572" fill-opacity="0.88" stroke="#0d0d0d" stroke-width="2.2"/>
<circle cx="813.8" cy="899.5" r="9.9" fill="#e3c75d" fill-opacity="0.88" stroke="#0d0d0d" stroke-width="2.2"/>
<circle cx="710.0" cy="896.5" r="9.9" fill="#7a7572" fill-opacity="0.88" stroke="#0d0d0d" stroke-width="2.2"/>
<circle cx="720.5" cy="908.5" r="9.9" fill="#7a7572" fill-opacity="0.88" stroke="#0d0d0d" stroke-width="2.2"/>
<circle cx="675.4" cy="913.0" r="9.9" fill="#e3c75d" fill-opacity="0.88" stroke="#0d0d0d" stroke-width="2.2"/>
<circle cx="685.9" cy="913.0" r="9.9" fill="#e3c75d" fill-opacity="0.88" stroke="#0d0d0d" stroke-width="2.2"/>
<circle cx="843.9" cy="910.0" r="9.9" fill="#7a7572" fill-opacity="0.88" stroke="#0d0d0d" stroke-width="2.2"/>
<circle cx="865.0" cy="910.0" r="9.9" fill="#7a7572" fill-opacity="0.88" stroke="#0d0d0d" stroke-width="2.2"/>
<circle cx="855.9" cy="907.0" r="9.9" fill="#e3c75d" fill-opacity="0.88" stroke="#0d0d0d" stroke-width="2.2"/>
<circle cx="892.0" cy="919.0" r="9.9" fill="#7a7572" fill-opacity="0.88" stroke="#0d0d0d" stroke-width="2.2"/>
<circle cx="858.9" cy="929.6" r="9.9" fill="#7a7572" fill-opacity="0.88" stroke="#0d0d0d" stroke-width="2.2"/>
<circle cx="845.4" cy="925.1" r="9.9" fill="#e3c75d" fill-opacity="0.88" stroke="#0d0d0d" stroke-width="2.2"/>
<circle cx="843.9" cy="932.6" r="9.9" fill="#e3c75d" fill-opacity="0.88" stroke="#0d0d0d" stroke-width="2.2"/>
<circle cx="851.4" cy="940.1" r="9.9" fill="#7a7572" fill-opacity="0.88" stroke="#0d0d0d" stroke-width="2.2"/>
<circle cx="765.6" cy="952.2" r="9.9" fill="#7a7572" fill-opacity="0.88" stroke="#0d0d0d" stroke-width="2.2"/>
<circle cx="714.5" cy="953.7" r="9.9" fill="#7a7572" fill-opacity="0.88" stroke="#0d0d0d" stroke-width="2.2"/>
<circle cx="720.5" cy="953.7" r="9.9" fill="#7a7572" fill-opacity="0.88" stroke="#0d0d0d" stroke-width="2.2"/>
<circle cx="744.6" cy="956.7" r="9.9" fill="#e3c75d" fill-opacity="0.88" stroke="#0d0d0d" stroke-width="2.2"/>
<circle cx="851.5" cy="963.0" r="9.9" fill="#e3c75d" fill-opacity="0.88" stroke="#0d0d0d" stroke-width="2.2"/>
<circle cx="851.5" cy="978.0" r="9.9" fill="#e3c75d" fill-opacity="0.88" stroke="#0d0d0d" stroke-width="2.2"/>
<circle cx="857.0" cy="989.5" r="9.9" fill="#7a7572" fill-opacity="0.88" stroke="#0d0d0d" stroke-width="2.2"/>
<circle cx="147.2" cy="970.5" r="9.9" fill="#7a7572" fill-opacity="0.88" stroke="#0d0d0d" stroke-width="2.2"/>
<circle cx="151.7" cy="973.5" r="9.9" fill="#e3c75d" fill-opacity="0.88" stroke="#0d0d0d" stroke-width="2.2"/>
<circle cx="160.7" cy="982.6" r="9.9" fill="#7a7572" fill-opacity="0.88" stroke="#0d0d0d" stroke-width="2.2"/>
<circle cx="187.8" cy="1008.1" r="9.9" fill="#7a7572" fill-opacity="0.88" stroke="#0d0d0d" stroke-width="2.2"/>
<circle cx="180.3" cy="991.6" r="9.9" fill="#e3c75d" fill-opacity="0.88" stroke="#0d0d0d" stroke-width="2.2"/>
<circle cx="190.8" cy="996.1" r="9.9" fill="#e3c75d" fill-opacity="0.88" stroke="#0d0d0d" stroke-width="2.2"/>
<circle cx="163.7" cy="1005.1" r="9.9" fill="#e3c75d" fill-opacity="0.88" stroke="#0d0d0d" stroke-width="2.2"/>
<circle cx="261.5" cy="966.0" r="9.9" fill="#e3c75d" fill-opacity="0.88" stroke="#0d0d0d" stroke-width="2.2"/>
<circle cx="216.4" cy="1003.6" r="9.9" fill="#e3c75d" fill-opacity="0.88" stroke="#0d0d0d" stroke-width="2.2"/>
<circle cx="247.9" cy="997.6" r="9.9" fill="#e3c75d" fill-opacity="0.88" stroke="#0d0d0d" stroke-width="2.2"/>
<circle cx="235.9" cy="996.1" r="9.9" fill="#df8a3c" fill-opacity="0.88" stroke="#0d0d0d" stroke-width="2.2"/>
<circle cx="269.0" cy="1008.1" r="9.9" fill="#df8a3c" fill-opacity="0.88" stroke="#0d0d0d" stroke-width="2.2"/>
<circle cx="282.5" cy="1012.6" r="9.9" fill="#e3c75d" fill-opacity="0.88" stroke="#0d0d0d" stroke-width="2.2"/>
<circle cx="297.6" cy="1015.7" r="9.9" fill="#e3c75d" fill-opacity="0.88" stroke="#0d0d0d" stroke-width="2.2"/>
<circle cx="249.4" cy="1015.7" r="9.9" fill="#e3c75d" fill-opacity="0.88" stroke="#0d0d0d" stroke-width="2.2"/>
<circle cx="207.3" cy="1023.2" r="9.9" fill="#e3c75d" fill-opacity="0.88" stroke="#0d0d0d" stroke-width="2.2"/>
<circle cx="232.9" cy="1029.2" r="9.9" fill="#7a7572" fill-opacity="0.88" stroke="#0d0d0d" stroke-width="2.2"/>
<circle cx="226.9" cy="1039.7" r="9.9" fill="#7a7572" fill-opacity="0.88" stroke="#0d0d0d" stroke-width="2.2"/>
<circle cx="147.2" cy="1033.7" r="9.9" fill="#7a7572" fill-opacity="0.88" stroke="#0d0d0d" stroke-width="2.2"/>
<circle cx="147.2" cy="1059.3" r="9.9" fill="#e3c75d" fill-opacity="0.88" stroke="#0d0d0d" stroke-width="2.2"/>
<circle cx="198.3" cy="1050.3" r="9.9" fill="#7a7572" fill-opacity="0.88" stroke="#0d0d0d" stroke-width="2.2"/>
<circle cx="190.8" cy="1059.3" r="9.9" fill="#e3c75d" fill-opacity="0.88" stroke="#0d0d0d" stroke-width="2.2"/>
<circle cx="193.8" cy="1069.8" r="9.9" fill="#e3c75d" fill-opacity="0.88" stroke="#0d0d0d" stroke-width="2.2"/>
<circle cx="226.9" cy="1060.8" r="9.9" fill="#7a7572" fill-opacity="0.88" stroke="#0d0d0d" stroke-width="2.2"/>
<circle cx="269.0" cy="1045.0" r="9.9" fill="#7a7572" fill-opacity="0.88" stroke="#0d0d0d" stroke-width="2.2"/>
<circle cx="267.5" cy="1047.2" r="9.9" fill="#e3c75d" fill-opacity="0.88" stroke="#0d0d0d" stroke-width="2.2"/>
<circle cx="144.2" cy="1101.4" r="9.9" fill="#7a7572" fill-opacity="0.88" stroke="#0d0d0d" stroke-width="2.2"/>
<circle cx="204.3" cy="1092.4" r="9.9" fill="#7a7572" fill-opacity="0.88" stroke="#0d0d0d" stroke-width="2.2"/>
<circle cx="192.3" cy="1093.9" r="9.9" fill="#df8a3c" fill-opacity="0.88" stroke="#0d0d0d" stroke-width="2.2"/>
<circle cx="190.8" cy="1110.4" r="9.9" fill="#e3c75d" fill-opacity="0.88" stroke="#0d0d0d" stroke-width="2.2"/>
<circle cx="187.8" cy="1127.0" r="9.9" fill="#df8a3c" fill-opacity="0.88" stroke="#0d0d0d" stroke-width="2.2"/>
<circle cx="187.8" cy="1145.0" r="9.9" fill="#e3c75d" fill-opacity="0.88" stroke="#0d0d0d" stroke-width="2.2"/>
<circle cx="208.8" cy="1145.0" r="9.9" fill="#df8a3c" fill-opacity="0.88" stroke="#0d0d0d" stroke-width="2.2"/>
<circle cx="261.5" cy="1118.0" r="9.9" fill="#7a7572" fill-opacity="0.88" stroke="#0d0d0d" stroke-width="2.2"/>
<circle cx="305.1" cy="1104.4" r="9.9" fill="#e3c75d" fill-opacity="0.88" stroke="#0d0d0d" stroke-width="2.2"/>
<circle cx="351.7" cy="1093.9" r="9.9" fill="#7a7572" fill-opacity="0.88" stroke="#0d0d0d" stroke-width="2.2"/>
<circle cx="336.7" cy="1096.9" r="9.9" fill="#e3c75d" fill-opacity="0.88" stroke="#0d0d0d" stroke-width="2.2"/>
<circle cx="356.2" cy="1110.4" r="9.9" fill="#e3c75d" fill-opacity="0.88" stroke="#0d0d0d" stroke-width="2.2"/>
<circle cx="378.8" cy="1005.1" r="9.9" fill="#7a7572" fill-opacity="0.88" stroke="#0d0d0d" stroke-width="2.2"/>
<circle cx="376.0" cy="1012.0" r="9.9" fill="#5b9a55" fill-opacity="0.88" stroke="#0d0d0d" stroke-width="2.2"/>
<circle cx="357.8" cy="1017.2" r="9.9" fill="#7a7572" fill-opacity="0.88" stroke="#0d0d0d" stroke-width="2.2"/>
<circle cx="369.8" cy="1015.7" r="9.9" fill="#df8a3c" fill-opacity="0.88" stroke="#0d0d0d" stroke-width="2.2"/>
<circle cx="404.4" cy="1012.6" r="9.9" fill="#7a7572" fill-opacity="0.88" stroke="#0d0d0d" stroke-width="2.2"/>
<circle cx="425.4" cy="1005.1" r="9.9" fill="#7a7572" fill-opacity="0.88" stroke="#0d0d0d" stroke-width="2.2"/>
<circle cx="425.4" cy="1020.2" r="9.9" fill="#7a7572" fill-opacity="0.88" stroke="#0d0d0d" stroke-width="2.2"/>
<circle cx="473.6" cy="1033.7" r="9.9" fill="#e3c75d" fill-opacity="0.88" stroke="#0d0d0d" stroke-width="2.2"/>
<circle cx="496.1" cy="1039.7" r="9.9" fill="#7a7572" fill-opacity="0.88" stroke="#0d0d0d" stroke-width="2.2"/>
<circle cx="479.6" cy="1062.3" r="9.9" fill="#e3c75d" fill-opacity="0.88" stroke="#0d0d0d" stroke-width="2.2"/>
<circle cx="524.7" cy="1047.2" r="9.9" fill="#7a7572" fill-opacity="0.88" stroke="#0d0d0d" stroke-width="2.2"/>
<circle cx="535.2" cy="1050.3" r="9.9" fill="#e3c75d" fill-opacity="0.88" stroke="#0d0d0d" stroke-width="2.2"/>
<circle cx="536.7" cy="1002.1" r="9.9" fill="#e3c75d" fill-opacity="0.88" stroke="#0d0d0d" stroke-width="2.2"/>
<circle cx="538.0" cy="1029.0" r="9.9" fill="#7a7572" fill-opacity="0.88" stroke="#0d0d0d" stroke-width="2.2"/>
<circle cx="389.3" cy="969.0" r="9.9" fill="#e3c75d" fill-opacity="0.88" stroke="#0d0d0d" stroke-width="2.2"/>
<circle cx="406.0" cy="960.0" r="9.9" fill="#e3c75d" fill-opacity="0.88" stroke="#0d0d0d" stroke-width="2.2"/>
<circle cx="317.0" cy="955.0" r="9.9" fill="#7a7572" fill-opacity="0.88" stroke="#0d0d0d" stroke-width="2.2"/>
<circle cx="538.3" cy="1106.0" r="9.9" fill="#7a7572" fill-opacity="0.88" stroke="#0d0d0d" stroke-width="2.2"/>
<circle cx="536.0" cy="959.0" r="9.9" fill="#e3c75d" fill-opacity="0.88" stroke="#0d0d0d" stroke-width="2.2"/>
<circle cx="595.7" cy="991.6" r="9.9" fill="#7a7572" fill-opacity="0.88" stroke="#0d0d0d" stroke-width="2.2"/>
<circle cx="609.2" cy="993.1" r="9.9" fill="#e3c75d" fill-opacity="0.88" stroke="#0d0d0d" stroke-width="2.2"/>
<circle cx="543.0" cy="1000.6" r="9.9" fill="#e3c75d" fill-opacity="0.88" stroke="#0d0d0d" stroke-width="2.2"/>
<circle cx="597.2" cy="1027.0" r="9.9" fill="#7a7572" fill-opacity="0.88" stroke="#0d0d0d" stroke-width="2.2"/>
<circle cx="597.2" cy="1032.2" r="9.9" fill="#e3c75d" fill-opacity="0.88" stroke="#0d0d0d" stroke-width="2.2"/>
<circle cx="646.8" cy="1029.0" r="9.9" fill="#7a7572" fill-opacity="0.88" stroke="#0d0d0d" stroke-width="2.2"/>
<circle cx="646.8" cy="1033.7" r="9.9" fill="#e3c75d" fill-opacity="0.88" stroke="#0d0d0d" stroke-width="2.2"/>
<circle cx="546.0" cy="1050.3" r="9.9" fill="#e3c75d" fill-opacity="0.88" stroke="#0d0d0d" stroke-width="2.2"/>
<circle cx="556.5" cy="1054.8" r="9.9" fill="#e3c75d" fill-opacity="0.88" stroke="#0d0d0d" stroke-width="2.2"/>
<circle cx="570.0" cy="1056.3" r="9.9" fill="#7a7572" fill-opacity="0.88" stroke="#0d0d0d" stroke-width="2.2"/>
<circle cx="579.0" cy="1057.8" r="9.9" fill="#5b9a55" fill-opacity="0.88" stroke="#0d0d0d" stroke-width="2.2"/>
<circle cx="585.1" cy="1059.3" r="9.9" fill="#e3c75d" fill-opacity="0.88" stroke="#0d0d0d" stroke-width="2.2"/>
<circle cx="598.7" cy="1062.3" r="9.9" fill="#7a7572" fill-opacity="0.88" stroke="#0d0d0d" stroke-width="2.2"/>
<circle cx="607.7" cy="1063.8" r="9.9" fill="#7a7572" fill-opacity="0.88" stroke="#0d0d0d" stroke-width="2.2"/>
<circle cx="633.3" cy="1066.8" r="9.9" fill="#e3c75d" fill-opacity="0.88" stroke="#0d0d0d" stroke-width="2.2"/>
<circle cx="645.3" cy="1069.8" r="9.9" fill="#e3c75d" fill-opacity="0.88" stroke="#0d0d0d" stroke-width="2.2"/>
<circle cx="675.4" cy="1063.8" r="9.9" fill="#7a7572" fill-opacity="0.88" stroke="#0d0d0d" stroke-width="2.2"/>
<circle cx="546.0" cy="1105.9" r="9.9" fill="#7a7572" fill-opacity="0.88" stroke="#0d0d0d" stroke-width="2.2"/>
<circle cx="592.6" cy="1108.9" r="9.9" fill="#7a7572" fill-opacity="0.88" stroke="#0d0d0d" stroke-width="2.2"/>
<circle cx="615.2" cy="1111.9" r="9.9" fill="#e3c75d" fill-opacity="0.88" stroke="#0d0d0d" stroke-width="2.2"/>
<circle cx="642.3" cy="1098.4" r="9.9" fill="#7a7572" fill-opacity="0.88" stroke="#0d0d0d" stroke-width="2.2"/>
<circle cx="643.8" cy="1110.4" r="9.9" fill="#7a7572" fill-opacity="0.88" stroke="#0d0d0d" stroke-width="2.2"/>
<circle cx="645.3" cy="1104.4" r="9.9" fill="#5b9a55" fill-opacity="0.88" stroke="#0d0d0d" stroke-width="2.2"/>
<circle cx="651.3" cy="1095.4" r="9.9" fill="#e3c75d" fill-opacity="0.88" stroke="#0d0d0d" stroke-width="2.2"/>
<circle cx="675.4" cy="1096.9" r="9.9" fill="#7a7572" fill-opacity="0.88" stroke="#0d0d0d" stroke-width="2.2"/>
<circle cx="661.8" cy="1118.0" r="9.9" fill="#7a7572" fill-opacity="0.88" stroke="#0d0d0d" stroke-width="2.2"/>
<circle cx="667.9" cy="1107.4" r="9.9" fill="#e3c75d" fill-opacity="0.88" stroke="#0d0d0d" stroke-width="2.2"/>
<circle cx="672.4" cy="1124.0" r="9.9" fill="#e3c75d" fill-opacity="0.88" stroke="#0d0d0d" stroke-width="2.2"/>
<circle cx="696.4" cy="1081.8" r="9.9" fill="#e3c75d" fill-opacity="0.88" stroke="#0d0d0d" stroke-width="2.2"/>
<circle cx="720.5" cy="1083.3" r="9.9" fill="#7a7572" fill-opacity="0.88" stroke="#0d0d0d" stroke-width="2.2"/>
<circle cx="728.0" cy="1083.3" r="9.9" fill="#e3c75d" fill-opacity="0.88" stroke="#0d0d0d" stroke-width="2.2"/>
<circle cx="732.5" cy="1080.3" r="9.9" fill="#e3c75d" fill-opacity="0.88" stroke="#0d0d0d" stroke-width="2.2"/>
<circle cx="747.6" cy="1063.8" r="9.9" fill="#e3c75d" fill-opacity="0.88" stroke="#0d0d0d" stroke-width="2.2"/>
<circle cx="759.6" cy="1077.3" r="9.9" fill="#e3c75d" fill-opacity="0.88" stroke="#0d0d0d" stroke-width="2.2"/>
<circle cx="737.1" cy="1099.9" r="9.9" fill="#df8a3c" fill-opacity="0.88" stroke="#0d0d0d" stroke-width="2.2"/>
<circle cx="753.6" cy="1105.9" r="9.9" fill="#e3c75d" fill-opacity="0.88" stroke="#0d0d0d" stroke-width="2.2"/>
<circle cx="710.0" cy="1128.5" r="9.9" fill="#7a7572" fill-opacity="0.88" stroke="#0d0d0d" stroke-width="2.2"/>
<circle cx="708.5" cy="1111.9" r="9.9" fill="#df8a3c" fill-opacity="0.88" stroke="#0d0d0d" stroke-width="2.2"/>
<circle cx="699.4" cy="1124.0" r="9.9" fill="#df8a3c" fill-opacity="0.88" stroke="#0d0d0d" stroke-width="2.2"/>
<circle cx="753.6" cy="1015.7" r="9.9" fill="#7a7572" fill-opacity="0.88" stroke="#0d0d0d" stroke-width="2.2"/>
<circle cx="737.1" cy="1032.2" r="9.9" fill="#e3c75d" fill-opacity="0.88" stroke="#0d0d0d" stroke-width="2.2"/>
<circle cx="764.1" cy="1133.0" r="9.9" fill="#7a7572" fill-opacity="0.88" stroke="#0d0d0d" stroke-width="2.2"/>
<circle cx="717.5" cy="1157.0" r="9.9" fill="#e3c75d" fill-opacity="0.88" stroke="#0d0d0d" stroke-width="2.2"/>
<circle cx="798.7" cy="1060.8" r="9.9" fill="#e3c75d" fill-opacity="0.88" stroke="#0d0d0d" stroke-width="2.2"/>
<circle cx="806.2" cy="1099.9" r="9.9" fill="#7a7572" fill-opacity="0.88" stroke="#0d0d0d" stroke-width="2.2"/>
<circle cx="807.7" cy="1087.9" r="9.9" fill="#e3c75d" fill-opacity="0.88" stroke="#0d0d0d" stroke-width="2.2"/>
<circle cx="794.2" cy="1083.3" r="9.9" fill="#df8a3c" fill-opacity="0.88" stroke="#0d0d0d" stroke-width="2.2"/>
<circle cx="783.7" cy="1095.4" r="9.9" fill="#e3c75d" fill-opacity="0.88" stroke="#0d0d0d" stroke-width="2.2"/>
<circle cx="792.7" cy="997.6" r="9.9" fill="#7a7572" fill-opacity="0.88" stroke="#0d0d0d" stroke-width="2.2"/>
<circle cx="801.7" cy="1002.1" r="9.9" fill="#e3c75d" fill-opacity="0.88" stroke="#0d0d0d" stroke-width="2.2"/>
<circle cx="821.3" cy="996.1" r="9.9" fill="#7a7572" fill-opacity="0.88" stroke="#0d0d0d" stroke-width="2.2"/>
<circle cx="813.8" cy="1146.5" r="9.9" fill="#7a7572" fill-opacity="0.88" stroke="#0d0d0d" stroke-width="2.2"/>
<circle cx="819.8" cy="1184.1" r="9.9" fill="#7a7572" fill-opacity="0.88" stroke="#0d0d0d" stroke-width="2.2"/>
<circle cx="869.4" cy="1098.4" r="9.9" fill="#5b9a55" fill-opacity="0.88" stroke="#0d0d0d" stroke-width="2.2"/>
<circle cx="846.9" cy="999.1" r="9.9" fill="#7a7572" fill-opacity="0.88" stroke="#0d0d0d" stroke-width="2.2"/>
<circle cx="852.9" cy="1011.1" r="9.9" fill="#e3c75d" fill-opacity="0.88" stroke="#0d0d0d" stroke-width="2.2"/>
<circle cx="843.9" cy="1021.7" r="9.9" fill="#e3c75d" fill-opacity="0.88" stroke="#0d0d0d" stroke-width="2.2"/>
<circle cx="870.9" cy="1005.1" r="9.9" fill="#7a7572" fill-opacity="0.88" stroke="#0d0d0d" stroke-width="2.2"/>
<circle cx="886.0" cy="982.6" r="9.9" fill="#7a7572" fill-opacity="0.88" stroke="#0d0d0d" stroke-width="2.2"/>
<circle cx="886.0" cy="993.1" r="9.9" fill="#e3c75d" fill-opacity="0.88" stroke="#0d0d0d" stroke-width="2.2"/>
<circle cx="899.5" cy="1009.6" r="9.9" fill="#7a7572" fill-opacity="0.88" stroke="#0d0d0d" stroke-width="2.2"/>
<circle cx="916.0" cy="1018.7" r="9.9" fill="#7a7572" fill-opacity="0.88" stroke="#0d0d0d" stroke-width="2.2"/>
<circle cx="931.1" cy="1012.6" r="9.9" fill="#7a7572" fill-opacity="0.88" stroke="#0d0d0d" stroke-width="2.2"/>
<circle cx="905.5" cy="1020.2" r="9.9" fill="#e3c75d" fill-opacity="0.88" stroke="#0d0d0d" stroke-width="2.2"/>
<circle cx="877.0" cy="1024.7" r="9.9" fill="#7a7572" fill-opacity="0.88" stroke="#0d0d0d" stroke-width="2.2"/>
<circle cx="892.0" cy="1027.7" r="9.9" fill="#7a7572" fill-opacity="0.88" stroke="#0d0d0d" stroke-width="2.2"/>
<circle cx="901.0" cy="1042.7" r="9.9" fill="#7a7572" fill-opacity="0.88" stroke="#0d0d0d" stroke-width="2.2"/>
<circle cx="864.9" cy="1036.7" r="9.9" fill="#7a7572" fill-opacity="0.88" stroke="#0d0d0d" stroke-width="2.2"/>
<circle cx="873.9" cy="1050.3" r="9.9" fill="#e3c75d" fill-opacity="0.88" stroke="#0d0d0d" stroke-width="2.2"/>
<circle cx="839.3" cy="1045.7" r="9.9" fill="#7a7572" fill-opacity="0.88" stroke="#0d0d0d" stroke-width="2.2"/>
<circle cx="837.8" cy="1057.8" r="9.9" fill="#7a7572" fill-opacity="0.88" stroke="#0d0d0d" stroke-width="2.2"/>
<circle cx="864.9" cy="1068.3" r="9.9" fill="#7a7572" fill-opacity="0.88" stroke="#0d0d0d" stroke-width="2.2"/>
<circle cx="860.4" cy="1060.8" r="9.9" fill="#e3c75d" fill-opacity="0.88" stroke="#0d0d0d" stroke-width="2.2"/>
<circle cx="840.8" cy="1072.8" r="9.9" fill="#e3c75d" fill-opacity="0.88" stroke="#0d0d0d" stroke-width="2.2"/>
<circle cx="816.8" cy="1075.8" r="9.9" fill="#e3c75d" fill-opacity="0.88" stroke="#0d0d0d" stroke-width="2.2"/>
<circle cx="833.3" cy="1078.8" r="9.9" fill="#e3c75d" fill-opacity="0.88" stroke="#0d0d0d" stroke-width="2.2"/>
<circle cx="858.9" cy="1081.8" r="9.9" fill="#e3c75d" fill-opacity="0.88" stroke="#0d0d0d" stroke-width="2.2"/>
<circle cx="869.4" cy="1087.9" r="9.9" fill="#e3c75d" fill-opacity="0.88" stroke="#0d0d0d" stroke-width="2.2"/>
<circle cx="828.8" cy="1089.4" r="9.9" fill="#7a7572" fill-opacity="0.88" stroke="#0d0d0d" stroke-width="2.2"/>
<circle cx="828.8" cy="1102.9" r="9.9" fill="#7a7572" fill-opacity="0.88" stroke="#0d0d0d" stroke-width="2.2"/>
<circle cx="837.8" cy="1101.4" r="9.9" fill="#7a7572" fill-opacity="0.88" stroke="#0d0d0d" stroke-width="2.2"/>
<circle cx="877.0" cy="1108.9" r="9.9" fill="#7a7572" fill-opacity="0.88" stroke="#0d0d0d" stroke-width="2.2"/>
<circle cx="855.9" cy="1095.4" r="9.9" fill="#e3c75d" fill-opacity="0.88" stroke="#0d0d0d" stroke-width="2.2"/>
<circle cx="852.9" cy="1116.4" r="9.9" fill="#e3c75d" fill-opacity="0.88" stroke="#0d0d0d" stroke-width="2.2"/>
<circle cx="870.9" cy="1121.0" r="9.9" fill="#e3c75d" fill-opacity="0.88" stroke="#0d0d0d" stroke-width="2.2"/>
<circle cx="834.8" cy="1127.0" r="9.9" fill="#7a7572" fill-opacity="0.88" stroke="#0d0d0d" stroke-width="2.2"/>
<circle cx="836.3" cy="1131.5" r="9.9" fill="#e3c75d" fill-opacity="0.88" stroke="#0d0d0d" stroke-width="2.2"/>
<circle cx="827.3" cy="1140.5" r="9.9" fill="#e3c75d" fill-opacity="0.88" stroke="#0d0d0d" stroke-width="2.2"/>
<circle cx="840.8" cy="1140.5" r="9.9" fill="#e3c75d" fill-opacity="0.88" stroke="#0d0d0d" stroke-width="2.2"/>
<circle cx="858.9" cy="1142.0" r="9.9" fill="#df8a3c" fill-opacity="0.88" stroke="#0d0d0d" stroke-width="2.2"/>
<circle cx="870.9" cy="1143.5" r="9.9" fill="#e3c75d" fill-opacity="0.88" stroke="#0d0d0d" stroke-width="2.2"/>
<circle cx="886.0" cy="1143.5" r="9.9" fill="#e3c75d" fill-opacity="0.88" stroke="#0d0d0d" stroke-width="2.2"/>
<circle cx="904.0" cy="1136.0" r="9.9" fill="#7a7572" fill-opacity="0.88" stroke="#0d0d0d" stroke-width="2.2"/>
<circle cx="840.8" cy="1152.5" r="9.9" fill="#7a7572" fill-opacity="0.88" stroke="#0d0d0d" stroke-width="2.2"/>
<circle cx="828.8" cy="1151.0" r="9.9" fill="#e3c75d" fill-opacity="0.88" stroke="#0d0d0d" stroke-width="2.2"/>
<circle cx="855.9" cy="1158.6" r="9.9" fill="#7a7572" fill-opacity="0.88" stroke="#0d0d0d" stroke-width="2.2"/>
<circle cx="855.9" cy="1166.1" r="9.9" fill="#7a7572" fill-opacity="0.88" stroke="#0d0d0d" stroke-width="2.2"/>
<circle cx="843.9" cy="1179.6" r="9.9" fill="#7a7572" fill-opacity="0.88" stroke="#0d0d0d" stroke-width="2.2"/>
<circle cx="854.4" cy="1181.1" r="9.9" fill="#7a7572" fill-opacity="0.88" stroke="#0d0d0d" stroke-width="2.2"/>
<circle cx="880.0" cy="1179.6" r="9.9" fill="#7a7572" fill-opacity="0.88" stroke="#0d0d0d" stroke-width="2.2"/>
<circle cx="920.5" cy="1089.4" r="9.9" fill="#7a7572" fill-opacity="0.88" stroke="#0d0d0d" stroke-width="2.2"/>
<circle cx="899.5" cy="1113.4" r="9.9" fill="#e3c75d" fill-opacity="0.88" stroke="#0d0d0d" stroke-width="2.2"/>
<circle cx="910.0" cy="1102.9" r="9.9" fill="#e3c75d" fill-opacity="0.88" stroke="#0d0d0d" stroke-width="2.2"/>
<circle cx="920.5" cy="1101.4" r="9.9" fill="#e3c75d" fill-opacity="0.88" stroke="#0d0d0d" stroke-width="2.2"/>
<circle cx="845.4" cy="1212.7" r="9.9" fill="#e3c75d" fill-opacity="0.88" stroke="#0d0d0d" stroke-width="2.2"/>
<rect x="98" y="1343" width="364" height="29" fill="#ffffff" fill-opacity="0.85"/>
<text x="103" y="1365" font-size="21" fill="#555555" textLength="160" lengthAdjust="spacingAndGlyphs">© 2025 Mapbox</text>
<text x="275" y="1365" font-size="21" fill="#555555" textLength="183" lengthAdjust="spacingAndGlyphs">© OpenStreetMap</text>
</g>
</svg></body></html>
